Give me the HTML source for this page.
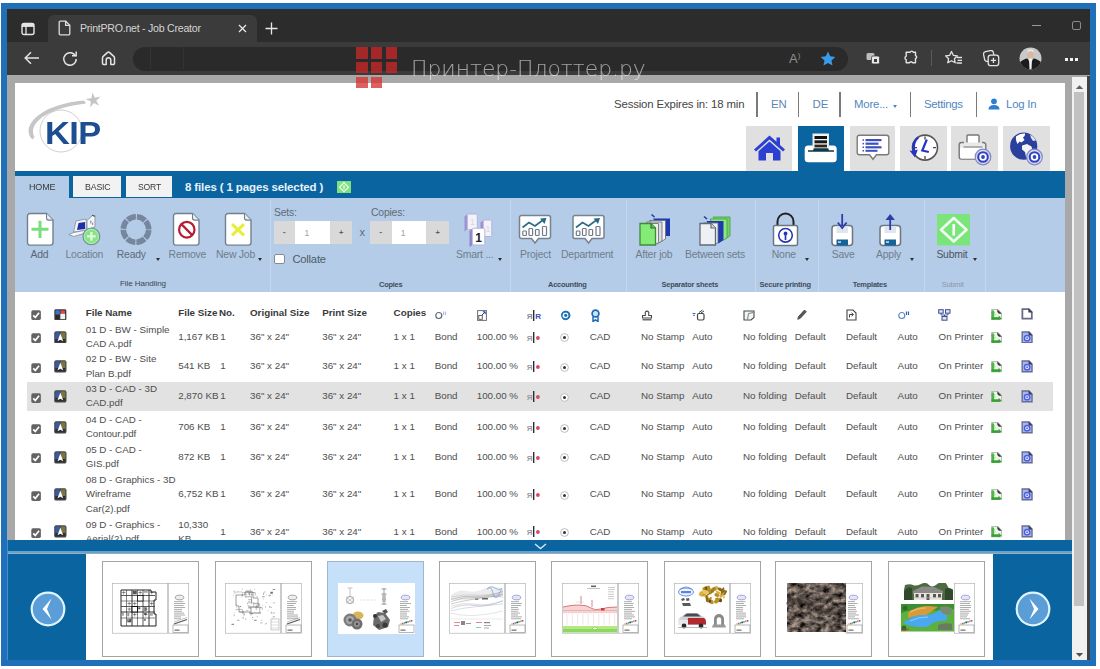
<!DOCTYPE html>
<html lang="en">
<head>
<meta charset="utf-8">
<title>PrintPRO.net - Job Creator</title>
<style>
html,body{margin:0;padding:0;}
body{width:1100px;height:669px;overflow:hidden;background:#fff;position:relative;font-family:"Liberation Sans",sans-serif;}
body div, body span, body svg{position:absolute;box-sizing:border-box;}
.t{white-space:nowrap;line-height:1;transform-origin:0 0;}
.ui{font-family:"Liberation Sans",sans-serif;}
.rl{font-size:10.4px;color:#6f7d8c;letter-spacing:-0.2px;}
.gl{font-size:7.4px;color:#3f4d5c;font-weight:bold;letter-spacing:-0.2px;}
.sep{width:1px;top:200px;height:92px;background:#c4d7ec;}
.arr{width:0;height:0;border-left:2.600px solid transparent;border-right:2.600px solid transparent;border-top:3.800px solid #2e2e2e;}
.tc{font-size:9.800px;color:#4e4e4e;}
.th{font-size:9.800px;color:#3a3a3a;font-weight:bold;}
</style>
</head>
<body>
<!-- outer frame -->
<div style="left:1.300px;top:3.300px;width:1094.300px;height:662.300px;background:#1f70b9;"></div>
<div style="left:7.200px;top:9.300px;width:1082.400px;height:650.400px;background:#a8a8a8;"></div>
<!-- browser chrome -->
<div style="left:7.200px;top:9.300px;width:1082.400px;height:33px;background:#2c2c2c;"></div>
<div style="left:7.200px;top:42.300px;width:1082.400px;height:33.200px;background:#3b3b3b;"></div>
<div style="left:48px;top:15px;width:209px;height:28px;background:#3b3b3b;border-radius:6px 6px 0 0;"></div>
<!-- tab strip icons -->
<svg style="left:21px;top:22px" width="14" height="14" viewBox="0 0 14 14"><rect x="1" y="1.5" width="12" height="11" rx="2" fill="none" stroke="#e6e6e6" stroke-width="1.4"/><rect x="1" y="1.5" width="12" height="3.4" fill="#e6e6e6"/><line x1="5" y1="4" x2="5" y2="12.5" stroke="#e6e6e6" stroke-width="1.3"/></svg>
<svg style="left:58px;top:20px" width="14" height="16" viewBox="0 0 14 16"><path d="M2.2 1.2h5.6l4 4v8.6a1 1 0 0 1-1 1H2.2a1 1 0 0 1-1-1V2.2a1 1 0 0 1 1-1z M7.6 1.4v4h4" fill="none" stroke="#dcdcdc" stroke-width="1.3"/></svg>
<span class="t" style="left:80px;top:22.800px;font-size:10.600px;color:#d4d4d4;letter-spacing:-0.250px;">PrintPRO.net - Job Creator</span>
<svg style="left:238px;top:24px" width="9" height="9" viewBox="0 0 9 9"><path d="M1 1l7 7M8 1l-7 7" stroke="#e8e8e8" stroke-width="1.3"/></svg>
<svg style="left:265px;top:22px" width="13" height="13" viewBox="0 0 13 13"><path d="M6.5 0.5v12M0.5 6.5h12" stroke="#e8e8e8" stroke-width="1.3"/></svg>
<!-- window buttons -->
<div style="left:1031.500px;top:24.500px;width:9px;height:1.3px;background:#9a9a9a;"></div>
<div style="left:1071.500px;top:20.500px;width:9.5px;height:9.5px;border:1.2px solid #8a8a8a;border-radius:2px;"></div>
<!-- nav buttons -->
<svg style="left:24px;top:51px" width="16" height="14" viewBox="0 0 16 14"><path d="M15 7H1.5M7 1.2L1.2 7l5.8 5.8" fill="none" stroke="#e4e4e4" stroke-width="1.5"/></svg>
<svg style="left:62px;top:50px" width="16" height="17" viewBox="0 0 16 17"><path d="M13.6 6.3A6.2 6.2 0 1 0 14.2 9" fill="none" stroke="#e4e4e4" stroke-width="1.5"/><path d="M10 5.8h4.2V1.6" fill="none" stroke="#e4e4e4" stroke-width="1.5"/></svg>
<svg style="left:101px;top:50px" width="15" height="16" viewBox="0 0 15 16"><path d="M1.500 7.800Q1.500 7 2.200 6.400L6.600 2.400Q7.500 1.600 8.400 2.400L12.800 6.400Q13.500 7 13.500 7.800V13.300a1.200 1.200 0 0 1-1.200 1.200H9.800V10a2.300 2.300 0 0 0-4.600 0v4.500H2.700a1.200 1.200 0 0 1-1.200-1.200z" fill="none" stroke="#e4e4e4" stroke-width="1.500" stroke-linejoin="round"/></svg>
<!-- address bar -->
<div style="left:133px;top:46.700px;width:715px;height:24.300px;background:#2a2a2a;border-radius:12.200px;"></div>
<div style="left:150px;top:47px;width:1px;height:22px;background:#333;"></div>
<div style="left:183px;top:47px;width:1px;height:22px;background:#333;"></div>
<span class="t" style="left:789px;top:52px;font-size:13px;color:#8e8e8e;">A<span style="position:static;font-size:8px;vertical-align:top;">)</span></span>
<svg style="left:820px;top:51px" width="16" height="15" viewBox="0 0 16 15"><path d="M8 0.6l2.2 4.7 5.1.6-3.8 3.5 1 5L8 11.9l-4.5 2.5 1-5L.7 5.9l5.1-.6z" fill="#3b9be8"/></svg>
<!-- right toolbar icons -->
<svg style="left:866px;top:52px" width="15" height="13" viewBox="0 0 15 13"><rect x="0.5" y="1" width="8" height="7" rx="1.5" fill="#bdbdbd"/><rect x="5.5" y="4" width="8" height="8" rx="1.5" fill="#e8e8e8" stroke="#3b3b3b" stroke-width="0.8"/><rect x="8" y="7" width="3" height="3" fill="#3b3b3b"/></svg>
<svg style="left:903px;top:50px" width="15" height="16" viewBox="0 0 15 16"><path d="M5 2.2h2.2a1.6 1.6 0 0 1 3 0H12.5v3.3a1.7 1.7 0 0 1 0 3.2v4.1H9.6a1.6 1.6 0 0 0-3 0H3.2V9.6a1.8 1.8 0 0 1 0-3.4V2.2z" fill="none" stroke="#e4e4e4" stroke-width="1.4" stroke-linejoin="round"/></svg>
<div style="left:931px;top:50px;width:1px;height:16px;background:#5a5a5a;"></div>
<svg style="left:945px;top:50px" width="18" height="16" viewBox="0 0 18 16"><path d="M6.5 1.5l1.8 3.8 4.1.5-3 2.9.8 4.1-3.7-2-3.7 2 .8-4.1-3-2.900 4.100-.5z" fill="none" stroke="#e4e4e4" stroke-width="1.3" stroke-linejoin="round"/><path d="M12 7.500h5M12.5 10.300h4.500M11.500 13h5.500" stroke="#e4e4e4" stroke-width="1.300"/></svg>
<svg style="left:983px;top:50px" width="17" height="17" viewBox="0 0 17 17"><rect x="1" y="1" width="10" height="10" rx="2.500" fill="none" stroke="#e4e4e4" stroke-width="1.300" transform="rotate(-12 6 6)"/><rect x="5.200" y="5.200" width="10.500" height="10.500" rx="2.500" fill="#3b3b3b" stroke="#e4e4e4" stroke-width="1.300"/><path d="M10.450 7.800v5.300M7.800 10.450h5.300" stroke="#e4e4e4" stroke-width="1.300"/></svg>
<!-- avatar -->
<svg style="left:1019px;top:47px" width="23" height="23" viewBox="0 0 23 23"><defs><clipPath id="av"><circle cx="11.500" cy="11.500" r="11"/></clipPath></defs><g clip-path="url(#av)"><rect width="23" height="23" fill="#c9c9c9"/><ellipse cx="11.500" cy="7.500" rx="3.300" ry="4.200" fill="#d9b8a6"/><path d="M8.300 5.500q3.200-3 6.400 0l-.3-2.300q-2.900-1.800-5.800 0z" fill="#e8e8e8"/><path d="M0 23V16q5-4.500 8.500-4.500l3 5 3-5Q18 11.500 23 16v7z" fill="#1c1c1c"/><path d="M10 11.500h3l-.5 11h-2z" fill="#f2f2f2"/></g></svg>
<div style="left:1064.5px;top:57.500px;width:3px;height:3px;background:#f0f0f0;"></div>
<div style="left:1069.800px;top:57.500px;width:3px;height:3px;background:#f0f0f0;"></div>
<div style="left:1075px;top:57.500px;width:3px;height:3px;background:#f0f0f0;"></div>
<!-- page -->
<div style="left:15px;top:83px;width:1049.7px;height:460px;background:#fff;"></div>
<!-- scrollbar -->
<div style="left:1072px;top:76.500px;width:14.700px;height:583.200px;background:#f1f1f1;"></div>
<div style="left:1074.3px;top:92px;width:10px;height:514px;background:#c1c1c1;"></div>
<div style="left:1086.7px;top:75.5px;width:3px;height:584.2px;background:#424242;"></div>
<svg style="left:1075px;top:84px" width="9" height="6" viewBox="0 0 9 6"><path d="M0.800 5L4.500 1.200 8.200 5z" fill="#606060"/></svg>
<svg style="left:1075px;top:652px" width="9" height="6" viewBox="0 0 9 6"><path d="M0.800 1L4.500 4.800 8.200 1z" fill="#505050"/></svg>
<!-- KIP logo -->
<svg style="left:24px;top:90px" width="90" height="70" viewBox="0 0 90 70">
  <path d="M8.500 49.500C-3 40 10 15 60 10.500L62 13.500C18 18.500 4 36 10.500 47z" fill="#c6c6c6"/>
  <circle cx="37" cy="41" r="21" fill="none" stroke="#c9c9c9" stroke-width="0.900"/>
  <path d="M69.500 2.500l1.600 5.500 5.900-.4-4.900 3.400 2.300 5.400-4.800-3.400-4.600 3.700 1.800-5.600-5-3.100 5.900-.1z" fill="#c4c4c4" transform="rotate(-8 69.500 10)"/>
</svg>
<span class="t" style="left:45px;top:117.200px;font-size:32px;font-weight:bold;color:#1d4e92;transform:scaleX(1.075);letter-spacing:-0.500px;">KIP</span>
<!-- top nav -->
<span class="t" style="left:614px;top:98.800px;font-size:11.400px;color:#444;letter-spacing:-0.150px;">Session Expires in: 18 min</span>
<div style="left:756px;top:92px;width:1.500px;height:24.500px;background:#7a7a7a;"></div>
<span class="t" style="left:771px;top:98.800px;font-size:11.400px;color:#5b86b3;">EN</span>
<div style="left:797.500px;top:92px;width:1.500px;height:24.500px;background:#7a7a7a;"></div>
<span class="t" style="left:812.500px;top:98.800px;font-size:11.400px;color:#5b86b3;">DE</span>
<div style="left:839px;top:92px;width:1.500px;height:24.500px;background:#7a7a7a;"></div>
<span class="t" style="left:854px;top:98.800px;font-size:11.400px;color:#4f86c0;letter-spacing:-0.200px;">More...</span>
<div class="arr" style="left:893px;top:104.500px;border-top-color:#4f86c0;"></div>
<div style="left:909.500px;top:92px;width:1.500px;height:24.500px;background:#7a7a7a;"></div>
<span class="t" style="left:924px;top:98.800px;font-size:11.400px;color:#4f86c0;letter-spacing:-0.300px;">Settings</span>
<div style="left:975.500px;top:92px;width:1.500px;height:24.500px;background:#7a7a7a;"></div>
<svg style="left:988px;top:98px" width="12" height="12" viewBox="0 0 12 12"><circle cx="6" cy="3.300" r="2.900" fill="#2f7fd0"/><path d="M0.500 11.500q0-4.500 5.500-4.500t5.500 4.500z" fill="#2f7fd0"/></svg>
<span class="t" style="left:1006px;top:98.800px;font-size:11.400px;color:#4f86c0;letter-spacing:-0.200px;">Log In</span>
<!-- nav buttons -->
<div style="left:745.800px;top:125.500px;width:46.700px;height:46px;background:#e0e0e0;"></div>
<div style="left:798.200px;top:125.500px;width:45.600px;height:46px;background:#0a64a0;"></div>
<div style="left:849.500px;top:125.500px;width:45.800px;height:46px;background:#e0e0e0;"></div>
<div style="left:900px;top:125.500px;width:47px;height:46px;background:#e0e0e0;"></div>
<div style="left:951.300px;top:125.500px;width:47px;height:46px;background:#e0e0e0;"></div>
<div style="left:1003.400px;top:125.500px;width:46.600px;height:46px;background:#e0e0e0;"></div>
<!-- home -->
<svg style="left:753px;top:134px" width="33" height="28" viewBox="0 0 33 28"><path d="M16.500 1.500L1 15.500l2 2L16.500 5.500 30 17.500l2-2-5-4.500V3.500h-3.500v4.300z" fill="#2b3fd0"/><path d="M16.500 7.500L5.500 17.200v9.300h7.500v-7.500h7v7.500h7.500v-9.300z" fill="#2b3fd0"/></svg>
<!-- printer (active) -->
<svg style="left:803px;top:133px" width="36" height="31" viewBox="0 0 36 31"><rect x="1.700" y="12.500" width="32" height="16.700" rx="3.500" fill="#fff"/><rect x="10" y="1" width="15.500" height="15" fill="#f4f4f4" stroke="#e9e9e9" stroke-width="1"/><rect x="11.500" y="3" width="12.500" height="3" fill="#111"/><rect x="11.500" y="7.300" width="12.500" height="3" fill="#1a1a1a"/><rect x="11.500" y="11.600" width="12.500" height="2.800" fill="#33231a"/><path d="M5 17.200h5l1-2h14l1 2h5v1.600H5z" fill="#0d3a4a"/></svg>
<!-- comment list -->
<svg style="left:856px;top:134px" width="34" height="27" viewBox="0 0 34 27"><path d="M3.500 1.200h27a2.300 2.300 0 0 1 2.300 2.300v15a2.300 2.300 0 0 1-2.300 2.300H20.500l-3.500 4.500-3.500-4.500H3.500a2.300 2.300 0 0 1-2.300-2.300v-15a2.300 2.300 0 0 1 2.300-2.300z" fill="#fff" stroke="#7a7a7a" stroke-width="1.400"/><g fill="#3a4fc4"><rect x="9.500" y="5" width="16" height="2.200"/><rect x="9.500" y="8.600" width="13" height="2.200"/><rect x="9.500" y="12.200" width="16" height="2.200"/><rect x="9.500" y="15.800" width="12" height="2"/><rect x="6.500" y="5.300" width="1.500" height="1.500"/><rect x="6.500" y="8.900" width="1.500" height="1.500"/><rect x="6.500" y="12.500" width="1.500" height="1.500"/><rect x="6.500" y="16" width="1.500" height="1.500"/></g></svg>
<!-- clock -->
<svg style="left:908px;top:132px" width="32" height="32" viewBox="0 0 32 32"><circle cx="17" cy="15.600" r="12.500" fill="#fff" stroke="#555" stroke-width="1.600"/><path d="M17 4.500v3M17 24v3M28 15.600h-3M6 15.600H9" stroke="#444" stroke-width="1.300"/><path d="M18.800 7.500L14.300 18.500l6.500 1.500" fill="none" stroke="#2436c0" stroke-width="2.200"/><path d="M9.500 4.500Q2.500 10 4.500 19l-3-.5 5.500 7 2.800-8-2.600.8Q5.800 11 11 6z" fill="#2436c0"/></svg>
<!-- printer + gear -->
<svg style="left:957px;top:133px" width="36" height="34" viewBox="0 0 36 34"><rect x="10" y="2" width="12" height="12" rx="1" fill="#fff" stroke="#777" stroke-width="1.400"/><path d="M7 9.500h-2.500a2.300 2.300 0 0 0-2.300 2.300v12a2.300 2.300 0 0 0 2.300 2.300h22a2.300 2.300 0 0 0 2.300-2.300v-12a2.300 2.300 0 0 0-2.300-2.300H25" fill="#e9e9e9" stroke="#777" stroke-width="1.400"/><rect x="3" y="14.500" width="25" height="11" rx="1.500" fill="#fff"/><path d="M6.500 14h19" stroke="#888" stroke-width="1.200"/><circle cx="26" cy="24" r="7.800" fill="#d8dcf2" stroke="#8088c4" stroke-width="1.200"/><circle cx="26" cy="24" r="4.800" fill="#fff" stroke="#3344c0" stroke-width="2.100"/><circle cx="26" cy="24" r="1.900" fill="#3344c0"/></svg>
<!-- globe + gear -->
<svg style="left:1009px;top:131px" width="38" height="36" viewBox="0 0 38 36"><circle cx="14.700" cy="15.200" r="13.600" fill="#2b3f9c"/><path d="M7 5.500q4-3.500 9-3 .5 2.500-2 4l1.500 2.500-3 2.500-2-1-2 2.500q-2-3-1.500-7.500z" fill="#fff"/><path d="M13 14.500l5-1.500 4.500 2.500 1 3.500-2.500 3-1 5-3-1-1-5-3-2.500z" fill="#f4f4f4"/><path d="M21 3.500q4 2 6 6l-3 .5-2-3z" fill="#dfe3f5"/><circle cx="25.500" cy="26" r="7.800" fill="#d8dcf2" stroke="#8088c4" stroke-width="1.200"/><circle cx="25.500" cy="26" r="4.800" fill="#fff" stroke="#3344c0" stroke-width="2.100"/><circle cx="25.500" cy="26" r="1.900" fill="#3344c0"/></svg>
<!-- ribbon header -->
<div style="left:15px;top:171.200px;width:1049.700px;height:26.800px;background:#0a64a0;"></div>
<div style="left:15px;top:197.600px;width:1049.700px;height:94.400px;background:#b4cce7;"></div>
<div style="left:15px;top:175.500px;width:53.600px;height:23px;background:#b4cce7;"></div>
<div style="left:72.600px;top:175.700px;width:48px;height:21.300px;background:#f2f2f2;"></div>
<div style="left:125.500px;top:175.700px;width:46px;height:21.300px;background:#f2f2f2;"></div>
<span class="t" style="left:28.800px;top:181.700px;font-size:9.800px;color:#3a3a3a;transform:scaleX(0.920);letter-spacing:-0.200px;">HOME</span>
<span class="t" style="left:84.600px;top:181.500px;font-size:9.800px;color:#3a3a3a;transform:scaleX(0.900);letter-spacing:-0.200px;">BASIC</span>
<span class="t" style="left:137.600px;top:181.500px;font-size:9.800px;color:#3a3a3a;transform:scaleX(0.880);letter-spacing:-0.200px;">SORT</span>
<span class="t" style="left:185px;top:181.600px;font-size:11.500px;font-weight:bold;color:#e8f2fb;letter-spacing:-0.130px;">8 files ( 1 pages selected )</span>
<svg style="left:337px;top:181px" width="14" height="12.400" viewBox="0 0 14 11" preserveAspectRatio="none"><rect width="14" height="11" fill="#7ee07e"/><path d="M7 1.500l4.500 4-4.500 4-4.500-4z" fill="none" stroke="#eaffea" stroke-width="1.200"/><path d="M7 3.800v3.400" stroke="#fff" stroke-width="1.200"/></svg>
<!-- group separators -->
<div class="sep" style="left:270px;"></div>
<div class="sep" style="left:509.500px;"></div>
<div class="sep" style="left:625.500px;"></div>
<div class="sep" style="left:754.500px;"></div>
<div class="sep" style="left:818px;"></div>
<div class="sep" style="left:923.600px;"></div>
<div class="sep" style="left:985px;"></div>
<!-- File handling -->
<svg style="left:26px;top:212px" width="29" height="34.700" viewBox="0 0 29 34" preserveAspectRatio="none"><path d="M4 1.500h16.500l6.500 6.500v22a2.500 2.500 0 0 1-2.500 2.500H4A2.500 2.500 0 0 1 1.500 30V4A2.500 2.500 0 0 1 4 1.500z" fill="#fff" stroke="#71808f" stroke-width="1.400"/><path d="M20.500 1.500v4.500a2 2 0 0 0 2 2h4.500" fill="#e9edf2" stroke="#71808f" stroke-width="1.100"/><path d="M14 8.500v17M5.500 17h17" stroke="#7ade7a" stroke-width="3"/></svg>
<span class="t rl" style="left:30.500px;top:250px;color:#5a6673;">Add</span>
<svg style="left:68px;top:213px" width="35" height="35" viewBox="0 0 35 35"><path d="M19 7.500l5.500-5 2.500.800v10.500l-8 3z" fill="#f4f6fa" stroke="#8a94a0" stroke-width="0.900"/><path d="M24 2.300l3.200 1" stroke="#4a5560" stroke-width="1.200"/><path d="M22.800 7.500v3M24.700 9.500v2.500" stroke="#7a8490" stroke-width="1"/><path d="M5.500 19l2.500-11 10-2 .800 11.500z" fill="#f2f4f8" stroke="#8a94a0" stroke-width="0.900"/><path d="M9 17l1.500-7 6.500-1 .300 7z" fill="#1d30a8"/><path d="M0.800 21.500l5-2 13-2.500v2.500l-13 4z" fill="#f6f8fb" stroke="#8a94a0" stroke-width="0.900"/><circle cx="23.400" cy="23.400" r="8.400" fill="#86e486" stroke="#7d8a98" stroke-width="1.100"/><circle cx="23.400" cy="23.400" r="7" fill="none" stroke="#b4f0b4" stroke-width="0.900"/><path d="M23.400 19v8.800M19 23.400h8.800" stroke="#dcfadc" stroke-width="2.400"/></svg>
<span class="t rl" style="left:65.500px;top:250px;">Location</span>
<svg style="left:119px;top:213px" width="34" height="34" viewBox="0 0 34 34"><circle cx="17" cy="16.500" r="12.700" fill="none" stroke="#76869e" stroke-width="5.600" stroke-dasharray="8.900 1.075" stroke-dashoffset="-0.540"/></svg>
<span class="t rl" style="left:116.800px;top:250px;color:#5f6b78;">Ready</span>
<div class="arr" style="left:155.800px;top:257.600px;"></div>
<svg style="left:172px;top:212px" width="29" height="34.700" viewBox="0 0 29 34" preserveAspectRatio="none"><path d="M4 1.500h16.500l6.500 6.500v22a2.500 2.500 0 0 1-2.500 2.500H4A2.500 2.500 0 0 1 1.500 30V4A2.500 2.500 0 0 1 4 1.500z" fill="#fff" stroke="#71808f" stroke-width="1.400"/><path d="M20.500 1.500v4.500a2 2 0 0 0 2 2h4.500" fill="#e9edf2" stroke="#71808f" stroke-width="1.100"/><circle cx="14.800" cy="17.300" r="7.700" fill="none" stroke="#b81c34" stroke-width="2.200"/><path d="M9.400 11.900l10.800 10.800" stroke="#b81c34" stroke-width="2.200"/></svg>
<span class="t rl" style="left:168.600px;top:250px;">Remove</span>
<svg style="left:224px;top:212px" width="29" height="34.700" viewBox="0 0 29 34" preserveAspectRatio="none"><path d="M4 1.500h16.500l6.500 6.500v22a2.500 2.500 0 0 1-2.500 2.500H4A2.500 2.500 0 0 1 1.500 30V4A2.500 2.500 0 0 1 4 1.500z" fill="#fff" stroke="#71808f" stroke-width="1.400"/><path d="M20.500 1.500v4.500a2 2 0 0 0 2 2h4.500" fill="#e9edf2" stroke="#71808f" stroke-width="1.100"/><path d="M8 11.800l12 11.200M20 11.800L8 23" stroke="#e8ee38" stroke-width="3.100"/></svg>
<span class="t rl" style="left:216px;top:250px;">New Job</span>
<div class="arr" style="left:257.800px;top:257.600px;"></div>
<span class="t gl" style="left:120px;top:280.300px;font-weight:normal;font-size:8.100px;color:#3a4652;letter-spacing:-0.100px;">File Handling</span>
<!-- Copies group -->
<span class="t rl" style="left:274px;top:207.500px;font-size:10.400px;color:#5f6b78;">Sets:</span>
<div style="left:274px;top:221.400px;width:78.400px;height:22.600px;background:#d9d9d9;"></div>
<div style="left:295px;top:221.400px;width:35px;height:22.600px;background:#fff;"></div>
<span class="t" style="left:282.800px;top:228px;font-size:9px;font-weight:bold;color:#707070;">-</span>
<span class="t" style="left:304.500px;top:228.500px;font-size:8.500px;color:#a0a0a0;">1</span>
<span class="t" style="left:339px;top:229px;font-size:7.500px;font-weight:bold;color:#606060;">+</span>
<span class="t" style="left:359.500px;top:227px;font-size:11px;color:#5f6b78;">x</span>
<span class="t rl" style="left:371px;top:207.500px;font-size:10.400px;color:#5f6b78;">Copies:</span>
<div style="left:370.400px;top:221.400px;width:78.600px;height:22.600px;background:#d9d9d9;"></div>
<div style="left:391.800px;top:221.400px;width:34px;height:22.600px;background:#fff;"></div>
<span class="t" style="left:379.300px;top:228px;font-size:9px;font-weight:bold;color:#707070;">-</span>
<span class="t" style="left:400.700px;top:228.500px;font-size:8.500px;color:#a0a0a0;">1</span>
<span class="t" style="left:435.500px;top:229px;font-size:7.500px;font-weight:bold;color:#606060;">+</span>
<div style="left:274px;top:253.500px;width:10.500px;height:10.500px;background:#fff;border:1px solid #8a8a8a;border-radius:2px;"></div>
<span class="t" style="left:292.400px;top:253.500px;font-size:11.200px;color:#4f5b68;letter-spacing:-0.200px;">Collate</span>
<svg style="left:463px;top:212px" width="30" height="35" viewBox="0 0 30 35"><path d="M1.500 4.500l3-2.500v15l-3 2.500z" fill="#9d92d0"/><rect x="4.300" y="2" width="10" height="15.500" rx="1.300" fill="#f3f1fa" stroke="#b4abdc" stroke-width="0.900"/><text x="7" y="13" font-family="Liberation Sans,sans-serif" font-size="8.500" fill="#d5d9e2">1</text><path d="M17.500 10.500l3-2.500v16l-3 2.500z" fill="#9d92d0"/><rect x="20.300" y="8" width="8.500" height="16.500" rx="1.300" fill="#f3f1fa" stroke="#b4abdc" stroke-width="0.900"/><text x="22.500" y="19.500" font-family="Liberation Sans,sans-serif" font-size="8.500" fill="#d5d9e2">1</text><path d="M6.500 19l3-2.500v16.500l-3 2z" fill="#8f84c8"/><rect x="9.300" y="16.300" width="12.500" height="16.700" rx="1.300" fill="#fff" stroke="#b4abdc" stroke-width="0.900"/><text x="12.300" y="29.500" font-family="Liberation Sans,sans-serif" font-size="12" font-weight="bold" fill="#222">1</text></svg>
<span class="t rl" style="left:456px;top:250px;">Smart ...</span>
<div class="arr" style="left:497.600px;top:257.600px;"></div>
<span class="t gl" style="left:379px;top:280.500px;">Copies</span>
<!-- Accounting -->
<svg style="left:518px;top:214px" width="34" height="31" viewBox="0 0 34 31"><path d="M3.500 1.500h27a2 2 0 0 1 2 2v19a2 2 0 0 1-2 2H20.500l-3.500 4.500-3.500-4.500H3.500a2 2 0 0 1-2-2v-19a2 2 0 0 1 2-2z" fill="#fff" stroke="#76828f" stroke-width="1.500"/><g fill="none" stroke="#6f7b88" stroke-width="1.200"><rect x="4.800" y="17" width="3.600" height="4.500" rx="0.800"/><rect x="11" y="14.500" width="3.600" height="7" rx="0.800"/><rect x="17.500" y="15.500" width="3.600" height="6" rx="0.800"/><rect x="24.500" y="12.500" width="4" height="9" rx="0.800"/></g><path d="M4.500 13.500l6.500-5 6 3.500 8-6" fill="none" stroke="#2a6a86" stroke-width="1.600"/><path d="M22 4.500l6.500-.5-2 6z" fill="#2a6a86"/></svg>
<span class="t rl" style="left:520px;top:250px;">Project</span>
<svg style="left:571px;top:214px" width="35" height="31" viewBox="0 0 34 31"><path d="M3.500 1.500h27a2 2 0 0 1 2 2v19a2 2 0 0 1-2 2H20.500l-3.500 4.500-3.500-4.500H3.500a2 2 0 0 1-2-2v-19a2 2 0 0 1 2-2z" fill="#fff" stroke="#76828f" stroke-width="1.500"/><g fill="none" stroke="#6f7b88" stroke-width="1.200"><rect x="4.800" y="17" width="3.600" height="4.500" rx="0.800"/><rect x="11" y="14.500" width="3.600" height="7" rx="0.800"/><rect x="17.500" y="15.500" width="3.600" height="6" rx="0.800"/><rect x="24.500" y="12.500" width="4" height="9" rx="0.800"/></g><path d="M4.500 13.500l6.500-5 6 3.500 8-6" fill="none" stroke="#2a6a86" stroke-width="1.600"/><path d="M22 4.500l6.500-.5-2 6z" fill="#2a6a86"/></svg>
<span class="t rl" style="left:561px;top:250px;">Department</span>
<span class="t gl" style="left:548px;top:280.500px;">Accounting</span>
<!-- Separator sheets -->
<svg style="left:638px;top:212px" width="34" height="35" viewBox="0 0 34 35"><path d="M15 6.500h17v17.500h-6z" fill="#1f3ab0"/><path d="M11.500 8.500h16v18.500l-5 3z" fill="#f4f4f4" stroke="#6a7480" stroke-width="0.900"/><path d="M8.500 10h15.500v19l-5 3z" fill="#dcdcdc" stroke="#6a7480" stroke-width="0.900"/><path d="M5.500 11.500h15v19l-4 2.500z" fill="#f0f0f0" stroke="#6a7480" stroke-width="0.900"/><path d="M2 11.500h11l4.500 4.500V33H2z" fill="#84ec76" stroke="#3f8a3a" stroke-width="1.300"/><path d="M13 11.500v4.500h4.500" fill="#5ac850" stroke="#2f6a2f" stroke-width="1.200"/><path d="M13.500 2.500l3 2.500" stroke="#1f3ab0" stroke-width="1.600"/></svg>
<span class="t rl" style="left:635.500px;top:250px;">After job</span>
<svg style="left:698px;top:212px" width="34" height="35" viewBox="0 0 34 35"><path d="M15 5h17v19l-5 3z" fill="#6fd466" stroke="#4a9a48" stroke-width="0.800"/><path d="M12 7h17v19l-5 3z" fill="#8fe67e" stroke="#4a9a48" stroke-width="0.800"/><path d="M8.500 9h17v19l-5 3.500z" fill="#1f3ab0"/><path d="M5.500 11h14.500v19.500l-4 2.500z" fill="#f2f2f2" stroke="#6a7480" stroke-width="0.900"/><path d="M2 11.500h11l4.500 4.500V33H2z" fill="#eef0f4" stroke="#5f6a78" stroke-width="1.300"/><path d="M13 11.500v4.500h4.500" fill="#d4d8e0" stroke="#5f6a78" stroke-width="1.200"/><path d="M6 4.500l3 2.500" stroke="#1f3ab0" stroke-width="1.600"/></svg>
<span class="t rl" style="left:685px;top:250px;">Between sets</span>
<span class="t gl" style="left:661.500px;top:280.500px;">Separator sheets</span>
<!-- Secure printing -->
<svg style="left:771px;top:211px" width="29" height="36" viewBox="0 0 29 36"><path d="M6.500 15V10.500a8 8 0 0 1 16 0V15" fill="none" stroke="#222" stroke-width="2"/><rect x="2.500" y="14.500" width="24" height="20" rx="1.500" fill="#fff" stroke="#6b7683" stroke-width="1.500"/><circle cx="14.500" cy="24.300" r="6.800" fill="none" stroke="#2438b8" stroke-width="1.600"/><circle cx="14.500" cy="22.500" r="1.900" fill="#2438b8"/><path d="M14.500 23v6" stroke="#2438b8" stroke-width="1.700"/></svg>
<span class="t rl" style="left:771.800px;top:250px;">None</span>
<div class="arr" style="left:805.200px;top:257.600px;"></div>
<span class="t gl" style="left:759.600px;top:280.500px;">Secure printing</span>
<!-- Templates -->
<svg style="left:830px;top:213px" width="24" height="34" viewBox="0 0 24 34"><rect x="2" y="12.500" width="20.500" height="20" rx="3" fill="#fff" stroke="#6b7683" stroke-width="1.500"/><rect x="6.500" y="13" width="11.500" height="7" fill="#dfe6f0"/><rect x="6.500" y="26.500" width="11.500" height="6" fill="#16639a"/><rect x="8" y="28.300" width="3" height="1.500" fill="#cfe6f7"/><path d="M12.200 1v12" stroke="#2b3da8" stroke-width="1.800"/><path d="M7.800 9.500l4.400 5.500 4.400-5.500" fill="none" stroke="#2b3da8" stroke-width="1.800"/></svg>
<span class="t rl" style="left:831.800px;top:250px;">Save</span>
<svg style="left:878px;top:213px" width="24" height="34" viewBox="0 0 24 34"><rect x="2" y="12.500" width="20.500" height="20" rx="3" fill="#fff" stroke="#6b7683" stroke-width="1.500"/><rect x="6.500" y="13" width="11.500" height="7" fill="#dfe6f0"/><rect x="6.500" y="26.500" width="11.500" height="6" fill="#16639a"/><rect x="8" y="28.300" width="3" height="1.500" fill="#cfe6f7"/><path d="M12.200 4v13" stroke="#2b3da8" stroke-width="1.800"/><path d="M7.500 7L12.200 1l4.700 6z" fill="#2b3da8"/></svg>
<span class="t rl" style="left:876px;top:250px;">Apply</span>
<div class="arr" style="left:910px;top:257.600px;"></div>
<span class="t gl" style="left:852.700px;top:280.500px;">Templates</span>
<!-- Submit -->
<svg style="left:936.700px;top:214px" width="33.500" height="31.500" viewBox="0 0 33.500 31.500"><rect width="33.500" height="31.500" fill="#7be57b"/><path d="M16.750 4L29.500 15.750 16.750 27.500 4 15.750z" fill="none" stroke="#f0fff0" stroke-width="2.600" stroke-linejoin="round"/><path d="M16.750 10v11.500" stroke="#fff" stroke-width="2.600"/></svg>
<span class="t rl" style="left:936.400px;top:250px;color:#4a5562;">Submit</span>
<div class="arr" style="left:973px;top:257.600px;"></div>
<span class="t gl" style="left:941.800px;top:280.500px;color:#8a98a8;font-weight:normal;">Submit</span>
<!-- table -->
<div style="left:27px;top:381.800px;width:1025.600px;height:29.400px;background:#e2e2e2;"></div>
<svg style="left:31.2px;top:309.9px" width="10.200" height="10.200" viewBox="0 0 10 10"><rect x="0.300" y="0.300" width="9.400" height="9.400" rx="1.600" fill="#636363"/><path d="M2.200 5.200l2 2.100 3.700-4.600" fill="none" stroke="#fff" stroke-width="1.700"/></svg>
<svg style="left:54.300px;top:308.600px" width="12.700" height="11.600" viewBox="0 0 12 12" preserveAspectRatio="none"><rect x="0.300" y="0.300" width="11.400" height="11.400" rx="1.500" fill="#3c3c3c"/><rect x="1.500" y="1.500" width="4" height="4" fill="#3f6fd8"/><rect x="6.300" y="1.500" width="4" height="4" fill="#e04a4a"/><rect x="6" y="5" width="4.500" height="5.500" fill="#f2f2f2"/><rect x="1.500" y="6.300" width="3.500" height="4" fill="#2a2a2a"/></svg>
<span class="t th" style="left:85.7px;top:308.2px;">File Name</span>
<span class="t th" style="left:178.2px;top:308.2px;">File Size</span>
<span class="t th" style="left:219px;top:308.2px;">No.</span>
<span class="t th" style="left:250px;top:308.2px;">Original Size</span>
<span class="t th" style="left:322.2px;top:308.2px;">Print Size</span>
<span class="t th" style="left:393.6px;top:308.2px;">Copies</span>
<!-- header icons -->
<svg style="left:434.500px;top:310px" width="13" height="10" viewBox="0 0 13 10"><circle cx="3.800" cy="5.500" r="3" fill="none" stroke="#5a6470" stroke-width="1.200"/><path d="M8.500 1.500v3.500M10.500 1.500v3.500" stroke="#a8c0e8" stroke-width="1.200"/></svg>
<svg style="left:476.700px;top:309.500px" width="10" height="11" viewBox="0 0 10 11"><rect x="0.600" y="0.600" width="8.800" height="9.800" fill="#fff" stroke="#6a7078" stroke-width="1"/><rect x="1.800" y="5.500" width="3.500" height="3.800" fill="none" stroke="#555" stroke-width="0.900"/><path d="M5 5l3-3M5.800 1.800h2.400v2.400" fill="none" stroke="#2a3fb0" stroke-width="1"/></svg>
<svg style="left:527px;top:309.500px" width="15" height="11" viewBox="0 0 15 11"><text x="0" y="8.500" font-family="Liberation Sans,sans-serif" font-size="8" font-weight="bold" fill="#8a8a92" transform="translate(5.500 0) scale(-1 1)">R</text><path d="M6.700 0v11" stroke="#222" stroke-width="1.300"/><text x="8.300" y="8.500" font-family="Liberation Sans,sans-serif" font-size="8" font-weight="bold" fill="#3a4fc0">R</text></svg>
<svg style="left:559.500px;top:309.500px" width="11" height="11" viewBox="0 0 11 11"><path d="M5.500 0.800a4.700 4.700 0 1 1-3.300 8l1.200-1.200a3 3 0 1 0-.9-2.300H.500L2.800 2.500" fill="#1a72b8"/><circle cx="5.700" cy="5.300" r="1.600" fill="#1a72b8"/><circle cx="5.700" cy="5.300" r="3.900" fill="none" stroke="#1a72b8" stroke-width="1.500"/></svg>
<svg style="left:589.500px;top:308.500px" width="11" height="13" viewBox="0 0 11 13"><circle cx="5.500" cy="4.500" r="3.400" fill="#cfe2f5" stroke="#1a6ab8" stroke-width="1.700"/><path d="M3 7.500v5l2.500-1.600L8 12.500v-5" fill="none" stroke="#1a6ab8" stroke-width="1.500"/></svg>
<svg style="left:640.500px;top:309.500px" width="12" height="11" viewBox="0 0 12 11"><path d="M4.300 5.500V3.500a1.800 1.800 0 1 1 3.400 0v2h2.800v2.500H1.500V5.500z" fill="none" stroke="#4a4a4a" stroke-width="1.100"/><path d="M1.500 9.800h9" stroke="#4a4a4a" stroke-width="1.200"/></svg>
<svg style="left:692px;top:308.500px" width="14" height="12" viewBox="0 0 14 12"><rect x="5.500" y="4.500" width="6.500" height="6.500" rx="1.500" fill="none" stroke="#444" stroke-width="1.200"/><path d="M7 3.500l3.500-2.500M9 4l3-2" stroke="#444" stroke-width="1"/><path d="M0.500 4.500h3M1 6.300h2" stroke="#3a6fd0" stroke-width="1"/></svg>
<svg style="left:743px;top:309.500px" width="12" height="11" viewBox="0 0 12 11"><path d="M1 1h10v6.500L8 10H1z" fill="#f4f4f4" stroke="#4a4a4a" stroke-width="1.100"/><path d="M4.500 9.500l1-6 5-1" fill="none" stroke="#6a8a6a" stroke-width="1"/></svg>
<svg style="left:795.500px;top:309px" width="11" height="12" viewBox="0 0 11 12"><path d="M8.500 1l1.800 1.800-6 6.500-2.600 1 .8-2.700z" fill="#555" stroke="#444" stroke-width="0.800"/></svg>
<svg style="left:846px;top:309px" width="11" height="12" viewBox="0 0 11 12"><path d="M1 1h6l3 3v7H1z" fill="#fff" stroke="#444" stroke-width="1.100"/><path d="M3.500 8.500v-3h3.500M5.500 3.800l2 1.700-2 1.700" fill="none" stroke="#444" stroke-width="1"/></svg>
<svg style="left:897.500px;top:310px" width="13" height="10" viewBox="0 0 13 10"><circle cx="3.800" cy="5.500" r="3" fill="none" stroke="#5a8ac8" stroke-width="1.200"/><path d="M8.500 1.500v3.500M10.500 1.500v3.500" stroke="#2a5fc0" stroke-width="1.200"/></svg>
<svg style="left:938px;top:309px" width="13" height="12" viewBox="0 0 13 12"><rect x="0.700" y="0.700" width="4.500" height="3.500" fill="#dfe6f5" stroke="#3a4a90" stroke-width="1"/><rect x="7.500" y="0.700" width="4.500" height="3.500" fill="#dfe6f5" stroke="#3a4a90" stroke-width="1"/><rect x="4" y="7.500" width="5" height="3.700" fill="#dfe6f5" stroke="#3a4a90" stroke-width="1"/><path d="M3 4.500v1.500h7V4.500M6.500 6v1.500" fill="none" stroke="#3a4a90" stroke-width="0.900"/></svg>
<svg style="left:991px;top:308.700px" width="11" height="11.200" viewBox="0 0 11 11" preserveAspectRatio="none"><path d="M0.500 0.500h6.500l3.500 3.500v6.500h-10z" fill="#eef6ec" stroke="#a8b4a8" stroke-width="0.800"/><path d="M6.300 0.200l4.500 4.500h-2.800l-1.700-1.700z" fill="#3a3a3a"/><rect x="0.600" y="2.800" width="2.500" height="7.600" fill="#4fb348"/><path d="M0 3.600l1.900-3 1.900 3z" fill="#4fb348"/><rect x="0.600" y="8" width="7.500" height="2.500" fill="#37a032"/><path d="M7.600 6.400l3 2.900-3 1.700z" fill="#37a032"/><path d="M3.100 4l2 1.500-2 1.500z" fill="#a8e0a0"/></svg>
<svg style="left:1021.300px;top:308.300px" width="12.200" height="11.800" viewBox="0 0 12 12"><path d="M1.200 1.200h6.600l3 3v6.600H1.200z" fill="#fff" stroke="#666a84" stroke-width="1.800"/><path d="M7.300 0.300l4.400 4.400h-4.400z" fill="#3c3c50"/></svg>

<svg style="left:31.2px;top:333.2px" width="10.200" height="10.200" viewBox="0 0 10 10"><rect x="0.300" y="0.300" width="9.400" height="9.400" rx="1.600" fill="#636363"/><path d="M2.200 5.200l2 2.100 3.700-4.600" fill="none" stroke="#fff" stroke-width="1.700"/></svg>
<svg style="left:54.3px;top:330.7px" width="12.700" height="12.800" viewBox="0 0 12 12"><rect x="0.200" y="0.200" width="11.600" height="11.600" rx="1.800" fill="#454548"/><rect x="1.200" y="1.200" width="4.300" height="9.600" fill="#3a5aa0"/><rect x="6.500" y="1.200" width="4.300" height="9.600" fill="#7a7440"/><rect x="1.200" y="7.500" width="9.600" height="3.300" fill="#2e2e32"/><path d="M3.300 9.600L6 2.300l2.700 7.300L6 8.200z" fill="#fff"/></svg>
<span class="t tc" style="left:85.7px;top:324.8px;">01 D - BW - Simple</span>
<span class="t tc" style="left:85.7px;top:339.1px;">CAD A.pdf</span>
<span class="t tc" style="left:178.2px;top:331.9px;">1,167 KB</span>
<span class="t tc" style="left:220.3px;top:331.9px;">1</span>
<span class="t tc" style="left:250px;top:331.9px;">36" x 24"</span>
<span class="t tc" style="left:322.2px;top:331.9px;">36" x 24"</span>
<span class="t tc" style="left:393.6px;top:331.9px;">1 x 1</span>
<span class="t tc" style="left:434.7px;top:331.9px;">Bond</span>
<span class="t tc" style="left:476.7px;top:331.9px;">100.00 %</span>
<svg style="left:527px;top:331.6px" width="15" height="11" viewBox="0 0 15 11"><text x="0" y="8.500" font-family="Liberation Sans,sans-serif" font-size="8" font-weight="bold" fill="#9a9aa2" transform="translate(5.500 0) scale(-1 1)">R</text><path d="M6.700 0v11" stroke="#222" stroke-width="1.300"/><circle cx="10.900" cy="6" r="1.900" fill="#d8486a"/></svg>
<svg style="left:559.500px;top:333.1px" width="9" height="9" viewBox="0 0 9 9"><circle cx="4.500" cy="4.500" r="3.900" fill="#fff" stroke="#b5b5b5" stroke-width="0.900"/><circle cx="4.500" cy="4.500" r="1.500" fill="#333"/></svg>
<span class="t tc" style="left:589.7px;top:331.9px;">CAD</span>
<span class="t tc" style="left:640.9px;top:331.9px;">No Stamp</span>
<span class="t tc" style="left:692.3px;top:331.9px;">Auto</span>
<span class="t tc" style="left:742.9px;top:331.9px;">No folding</span>
<span class="t tc" style="left:794.7px;top:331.9px;">Default</span>
<span class="t tc" style="left:846px;top:331.9px;">Default</span>
<span class="t tc" style="left:897.6px;top:331.9px;">Auto</span>
<span class="t tc" style="left:938.6px;top:331.9px;">On Printer</span>
<svg style="left:991px;top:331.7px" width="11" height="11.400" viewBox="0 0 11 11" preserveAspectRatio="none"><path d="M0.500 0.500h6.500l3.500 3.500v6.500h-10z" fill="#eef6ec" stroke="#a8b4a8" stroke-width="0.800"/><path d="M6.300 0.200l4.500 4.500h-2.800l-1.700-1.700z" fill="#3a3a3a"/><rect x="0.600" y="2.800" width="2.500" height="7.600" fill="#4fb348"/><path d="M0 3.600l1.900-3 1.900 3z" fill="#4fb348"/><rect x="0.600" y="8" width="7.500" height="2.500" fill="#37a032"/><path d="M7.600 6.400l3 2.900-3 1.700z" fill="#37a032"/><path d="M3.100 4l2 1.500-2 1.500z" fill="#a8e0a0"/></svg>
<svg style="left:1021.300px;top:330.7px" width="12.200" height="12.800" viewBox="0 0 12 13"><path d="M1 1h7l3 3v8H1z" fill="#a8b6f0" stroke="#666c92" stroke-width="1.400"/><path d="M7.500 0.500l4 4h-4z" fill="#3c3c50"/><circle cx="6" cy="7.300" r="2.700" fill="#e8ecff" stroke="#4a5ee0" stroke-width="1.500"/><circle cx="6" cy="7.300" r="0.900" fill="#4a5ee0"/></svg>
<svg style="left:31.2px;top:362.7px" width="10.200" height="10.200" viewBox="0 0 10 10"><rect x="0.300" y="0.300" width="9.400" height="9.400" rx="1.600" fill="#636363"/><path d="M2.200 5.200l2 2.100 3.700-4.600" fill="none" stroke="#fff" stroke-width="1.700"/></svg>
<svg style="left:54.3px;top:360.2px" width="12.700" height="12.800" viewBox="0 0 12 12"><rect x="0.200" y="0.200" width="11.600" height="11.600" rx="1.800" fill="#454548"/><rect x="1.200" y="1.200" width="4.300" height="9.600" fill="#3a5aa0"/><rect x="6.500" y="1.200" width="4.300" height="9.600" fill="#7a7440"/><rect x="1.200" y="7.500" width="9.600" height="3.300" fill="#2e2e32"/><path d="M3.300 9.600L6 2.300l2.700 7.300L6 8.200z" fill="#fff"/></svg>
<span class="t tc" style="left:85.7px;top:354.3px;">02 D - BW - Site</span>
<span class="t tc" style="left:85.7px;top:368.6px;">Plan B.pdf</span>
<span class="t tc" style="left:178.2px;top:361.4px;">541 KB</span>
<span class="t tc" style="left:220.3px;top:361.4px;">1</span>
<span class="t tc" style="left:250px;top:361.4px;">36" x 24"</span>
<span class="t tc" style="left:322.2px;top:361.4px;">36" x 24"</span>
<span class="t tc" style="left:393.6px;top:361.4px;">1 x 1</span>
<span class="t tc" style="left:434.7px;top:361.4px;">Bond</span>
<span class="t tc" style="left:476.7px;top:361.4px;">100.00 %</span>
<svg style="left:527px;top:361.1px" width="15" height="11" viewBox="0 0 15 11"><text x="0" y="8.500" font-family="Liberation Sans,sans-serif" font-size="8" font-weight="bold" fill="#9a9aa2" transform="translate(5.500 0) scale(-1 1)">R</text><path d="M6.700 0v11" stroke="#222" stroke-width="1.300"/><circle cx="10.900" cy="6" r="1.900" fill="#d8486a"/></svg>
<svg style="left:559.500px;top:362.6px" width="9" height="9" viewBox="0 0 9 9"><circle cx="4.500" cy="4.500" r="3.900" fill="#fff" stroke="#b5b5b5" stroke-width="0.900"/><circle cx="4.500" cy="4.500" r="1.500" fill="#333"/></svg>
<span class="t tc" style="left:589.7px;top:361.4px;">CAD</span>
<span class="t tc" style="left:640.9px;top:361.4px;">No Stamp</span>
<span class="t tc" style="left:692.3px;top:361.4px;">Auto</span>
<span class="t tc" style="left:742.9px;top:361.4px;">No folding</span>
<span class="t tc" style="left:794.7px;top:361.4px;">Default</span>
<span class="t tc" style="left:846px;top:361.4px;">Default</span>
<span class="t tc" style="left:897.6px;top:361.4px;">Auto</span>
<span class="t tc" style="left:938.6px;top:361.4px;">On Printer</span>
<svg style="left:991px;top:361.2px" width="11" height="11.400" viewBox="0 0 11 11" preserveAspectRatio="none"><path d="M0.500 0.500h6.500l3.500 3.500v6.500h-10z" fill="#eef6ec" stroke="#a8b4a8" stroke-width="0.800"/><path d="M6.300 0.200l4.500 4.500h-2.800l-1.700-1.700z" fill="#3a3a3a"/><rect x="0.600" y="2.800" width="2.500" height="7.600" fill="#4fb348"/><path d="M0 3.600l1.900-3 1.900 3z" fill="#4fb348"/><rect x="0.600" y="8" width="7.500" height="2.500" fill="#37a032"/><path d="M7.600 6.400l3 2.900-3 1.700z" fill="#37a032"/><path d="M3.100 4l2 1.500-2 1.500z" fill="#a8e0a0"/></svg>
<svg style="left:1021.300px;top:360.2px" width="12.200" height="12.800" viewBox="0 0 12 13"><path d="M1 1h7l3 3v8H1z" fill="#a8b6f0" stroke="#666c92" stroke-width="1.400"/><path d="M7.500 0.500l4 4h-4z" fill="#3c3c50"/><circle cx="6" cy="7.300" r="2.700" fill="#e8ecff" stroke="#4a5ee0" stroke-width="1.500"/><circle cx="6" cy="7.300" r="0.900" fill="#4a5ee0"/></svg>
<svg style="left:31.2px;top:392.6px" width="10.200" height="10.200" viewBox="0 0 10 10"><rect x="0.300" y="0.300" width="9.400" height="9.400" rx="1.600" fill="#636363"/><path d="M2.200 5.200l2 2.100 3.700-4.600" fill="none" stroke="#fff" stroke-width="1.700"/></svg>
<svg style="left:54.3px;top:390.1px" width="12.700" height="12.800" viewBox="0 0 12 12"><rect x="0.200" y="0.200" width="11.600" height="11.600" rx="1.800" fill="#454548"/><rect x="1.200" y="1.200" width="4.300" height="9.600" fill="#3a5aa0"/><rect x="6.500" y="1.200" width="4.300" height="9.600" fill="#7a7440"/><rect x="1.200" y="7.500" width="9.600" height="3.300" fill="#2e2e32"/><path d="M3.300 9.600L6 2.300l2.700 7.300L6 8.200z" fill="#fff"/></svg>
<span class="t tc" style="left:85.7px;top:384.2px;">03 D - CAD - 3D</span>
<span class="t tc" style="left:85.7px;top:398.4px;">CAD.pdf</span>
<span class="t tc" style="left:178.2px;top:391.3px;">2,870 KB</span>
<span class="t tc" style="left:220.3px;top:391.3px;">1</span>
<span class="t tc" style="left:250px;top:391.3px;">36" x 24"</span>
<span class="t tc" style="left:322.2px;top:391.3px;">36" x 24"</span>
<span class="t tc" style="left:393.6px;top:391.3px;">1 x 1</span>
<span class="t tc" style="left:434.7px;top:391.3px;">Bond</span>
<span class="t tc" style="left:476.7px;top:391.3px;">100.00 %</span>
<svg style="left:527px;top:391.0px" width="15" height="11" viewBox="0 0 15 11"><text x="0" y="8.500" font-family="Liberation Sans,sans-serif" font-size="8" font-weight="bold" fill="#9a9aa2" transform="translate(5.500 0) scale(-1 1)">R</text><path d="M6.700 0v11" stroke="#222" stroke-width="1.300"/><circle cx="10.900" cy="6" r="1.900" fill="#d8486a"/></svg>
<svg style="left:559.500px;top:392.5px" width="9" height="9" viewBox="0 0 9 9"><circle cx="4.500" cy="4.500" r="3.900" fill="#fff" stroke="#b5b5b5" stroke-width="0.900"/><circle cx="4.500" cy="4.500" r="1.500" fill="#333"/></svg>
<span class="t tc" style="left:589.7px;top:391.3px;">CAD</span>
<span class="t tc" style="left:640.9px;top:391.3px;">No Stamp</span>
<span class="t tc" style="left:692.3px;top:391.3px;">Auto</span>
<span class="t tc" style="left:742.9px;top:391.3px;">No folding</span>
<span class="t tc" style="left:794.7px;top:391.3px;">Default</span>
<span class="t tc" style="left:846px;top:391.3px;">Default</span>
<span class="t tc" style="left:897.6px;top:391.3px;">Auto</span>
<span class="t tc" style="left:938.6px;top:391.3px;">On Printer</span>
<svg style="left:991px;top:391.1px" width="11" height="11.400" viewBox="0 0 11 11" preserveAspectRatio="none"><path d="M0.500 0.500h6.500l3.500 3.500v6.500h-10z" fill="#eef6ec" stroke="#a8b4a8" stroke-width="0.800"/><path d="M6.300 0.200l4.500 4.500h-2.800l-1.700-1.700z" fill="#3a3a3a"/><rect x="0.600" y="2.800" width="2.500" height="7.600" fill="#4fb348"/><path d="M0 3.600l1.900-3 1.900 3z" fill="#4fb348"/><rect x="0.600" y="8" width="7.500" height="2.500" fill="#37a032"/><path d="M7.600 6.400l3 2.900-3 1.700z" fill="#37a032"/><path d="M3.100 4l2 1.500-2 1.500z" fill="#a8e0a0"/></svg>
<svg style="left:1021.300px;top:390.1px" width="12.200" height="12.800" viewBox="0 0 12 13"><path d="M1 1h7l3 3v8H1z" fill="#a8b6f0" stroke="#666c92" stroke-width="1.400"/><path d="M7.500 0.500l4 4h-4z" fill="#3c3c50"/><circle cx="6" cy="7.300" r="2.700" fill="#e8ecff" stroke="#4a5ee0" stroke-width="1.500"/><circle cx="6" cy="7.300" r="0.900" fill="#4a5ee0"/></svg>
<svg style="left:31.2px;top:423.6px" width="10.200" height="10.200" viewBox="0 0 10 10"><rect x="0.300" y="0.300" width="9.400" height="9.400" rx="1.600" fill="#636363"/><path d="M2.200 5.200l2 2.100 3.700-4.600" fill="none" stroke="#fff" stroke-width="1.700"/></svg>
<svg style="left:54.3px;top:421.1px" width="12.700" height="12.800" viewBox="0 0 12 12"><rect x="0.200" y="0.200" width="11.600" height="11.600" rx="1.800" fill="#454548"/><rect x="1.200" y="1.200" width="4.300" height="9.600" fill="#3a5aa0"/><rect x="6.500" y="1.200" width="4.300" height="9.600" fill="#7a7440"/><rect x="1.200" y="7.500" width="9.600" height="3.300" fill="#2e2e32"/><path d="M3.300 9.600L6 2.300l2.700 7.300L6 8.200z" fill="#fff"/></svg>
<span class="t tc" style="left:85.7px;top:415.2px;">04 D - CAD -</span>
<span class="t tc" style="left:85.7px;top:429.4px;">Contour.pdf</span>
<span class="t tc" style="left:178.2px;top:422.3px;">706 KB</span>
<span class="t tc" style="left:220.3px;top:422.3px;">1</span>
<span class="t tc" style="left:250px;top:422.3px;">36" x 24"</span>
<span class="t tc" style="left:322.2px;top:422.3px;">36" x 24"</span>
<span class="t tc" style="left:393.6px;top:422.3px;">1 x 1</span>
<span class="t tc" style="left:434.7px;top:422.3px;">Bond</span>
<span class="t tc" style="left:476.7px;top:422.3px;">100.00 %</span>
<svg style="left:527px;top:422.0px" width="15" height="11" viewBox="0 0 15 11"><text x="0" y="8.500" font-family="Liberation Sans,sans-serif" font-size="8" font-weight="bold" fill="#9a9aa2" transform="translate(5.500 0) scale(-1 1)">R</text><path d="M6.700 0v11" stroke="#222" stroke-width="1.300"/><circle cx="10.900" cy="6" r="1.900" fill="#d8486a"/></svg>
<svg style="left:559.500px;top:423.5px" width="9" height="9" viewBox="0 0 9 9"><circle cx="4.500" cy="4.500" r="3.900" fill="#fff" stroke="#b5b5b5" stroke-width="0.900"/><circle cx="4.500" cy="4.500" r="1.500" fill="#333"/></svg>
<span class="t tc" style="left:589.7px;top:422.3px;">CAD</span>
<span class="t tc" style="left:640.9px;top:422.3px;">No Stamp</span>
<span class="t tc" style="left:692.3px;top:422.3px;">Auto</span>
<span class="t tc" style="left:742.9px;top:422.3px;">No folding</span>
<span class="t tc" style="left:794.7px;top:422.3px;">Default</span>
<span class="t tc" style="left:846px;top:422.3px;">Default</span>
<span class="t tc" style="left:897.6px;top:422.3px;">Auto</span>
<span class="t tc" style="left:938.6px;top:422.3px;">On Printer</span>
<svg style="left:991px;top:422.1px" width="11" height="11.400" viewBox="0 0 11 11" preserveAspectRatio="none"><path d="M0.500 0.500h6.500l3.500 3.500v6.500h-10z" fill="#eef6ec" stroke="#a8b4a8" stroke-width="0.800"/><path d="M6.300 0.200l4.500 4.500h-2.800l-1.700-1.700z" fill="#3a3a3a"/><rect x="0.600" y="2.800" width="2.500" height="7.600" fill="#4fb348"/><path d="M0 3.600l1.900-3 1.900 3z" fill="#4fb348"/><rect x="0.600" y="8" width="7.500" height="2.500" fill="#37a032"/><path d="M7.600 6.400l3 2.900-3 1.700z" fill="#37a032"/><path d="M3.100 4l2 1.500-2 1.500z" fill="#a8e0a0"/></svg>
<svg style="left:1021.300px;top:421.1px" width="12.200" height="12.800" viewBox="0 0 12 13"><path d="M1 1h7l3 3v8H1z" fill="#a8b6f0" stroke="#666c92" stroke-width="1.400"/><path d="M7.500 0.500l4 4h-4z" fill="#3c3c50"/><circle cx="6" cy="7.300" r="2.700" fill="#e8ecff" stroke="#4a5ee0" stroke-width="1.500"/><circle cx="6" cy="7.300" r="0.900" fill="#4a5ee0"/></svg>
<svg style="left:31.2px;top:453.4px" width="10.200" height="10.200" viewBox="0 0 10 10"><rect x="0.300" y="0.300" width="9.400" height="9.400" rx="1.600" fill="#636363"/><path d="M2.200 5.200l2 2.100 3.700-4.600" fill="none" stroke="#fff" stroke-width="1.700"/></svg>
<svg style="left:54.3px;top:450.9px" width="12.700" height="12.800" viewBox="0 0 12 12"><rect x="0.200" y="0.200" width="11.600" height="11.600" rx="1.800" fill="#454548"/><rect x="1.200" y="1.200" width="4.300" height="9.600" fill="#3a5aa0"/><rect x="6.500" y="1.200" width="4.300" height="9.600" fill="#7a7440"/><rect x="1.200" y="7.500" width="9.600" height="3.300" fill="#2e2e32"/><path d="M3.300 9.600L6 2.300l2.700 7.300L6 8.200z" fill="#fff"/></svg>
<span class="t tc" style="left:85.7px;top:445.0px;">05 D - CAD -</span>
<span class="t tc" style="left:85.7px;top:459.2px;">GIS.pdf</span>
<span class="t tc" style="left:178.2px;top:452.1px;">872 KB</span>
<span class="t tc" style="left:220.3px;top:452.1px;">1</span>
<span class="t tc" style="left:250px;top:452.1px;">36" x 24"</span>
<span class="t tc" style="left:322.2px;top:452.1px;">36" x 24"</span>
<span class="t tc" style="left:393.6px;top:452.1px;">1 x 1</span>
<span class="t tc" style="left:434.7px;top:452.1px;">Bond</span>
<span class="t tc" style="left:476.7px;top:452.1px;">100.00 %</span>
<svg style="left:527px;top:451.8px" width="15" height="11" viewBox="0 0 15 11"><text x="0" y="8.500" font-family="Liberation Sans,sans-serif" font-size="8" font-weight="bold" fill="#9a9aa2" transform="translate(5.500 0) scale(-1 1)">R</text><path d="M6.700 0v11" stroke="#222" stroke-width="1.300"/><circle cx="10.900" cy="6" r="1.900" fill="#d8486a"/></svg>
<svg style="left:559.500px;top:453.3px" width="9" height="9" viewBox="0 0 9 9"><circle cx="4.500" cy="4.500" r="3.900" fill="#fff" stroke="#b5b5b5" stroke-width="0.900"/><circle cx="4.500" cy="4.500" r="1.500" fill="#333"/></svg>
<span class="t tc" style="left:589.7px;top:452.1px;">CAD</span>
<span class="t tc" style="left:640.9px;top:452.1px;">No Stamp</span>
<span class="t tc" style="left:692.3px;top:452.1px;">Auto</span>
<span class="t tc" style="left:742.9px;top:452.1px;">No folding</span>
<span class="t tc" style="left:794.7px;top:452.1px;">Default</span>
<span class="t tc" style="left:846px;top:452.1px;">Default</span>
<span class="t tc" style="left:897.6px;top:452.1px;">Auto</span>
<span class="t tc" style="left:938.6px;top:452.1px;">On Printer</span>
<svg style="left:991px;top:451.9px" width="11" height="11.400" viewBox="0 0 11 11" preserveAspectRatio="none"><path d="M0.500 0.500h6.500l3.500 3.500v6.500h-10z" fill="#eef6ec" stroke="#a8b4a8" stroke-width="0.800"/><path d="M6.300 0.200l4.500 4.500h-2.800l-1.700-1.700z" fill="#3a3a3a"/><rect x="0.600" y="2.800" width="2.500" height="7.600" fill="#4fb348"/><path d="M0 3.600l1.900-3 1.900 3z" fill="#4fb348"/><rect x="0.600" y="8" width="7.500" height="2.500" fill="#37a032"/><path d="M7.600 6.400l3 2.900-3 1.700z" fill="#37a032"/><path d="M3.100 4l2 1.500-2 1.500z" fill="#a8e0a0"/></svg>
<svg style="left:1021.300px;top:450.9px" width="12.200" height="12.800" viewBox="0 0 12 13"><path d="M1 1h7l3 3v8H1z" fill="#a8b6f0" stroke="#666c92" stroke-width="1.400"/><path d="M7.500 0.500l4 4h-4z" fill="#3c3c50"/><circle cx="6" cy="7.300" r="2.700" fill="#e8ecff" stroke="#4a5ee0" stroke-width="1.500"/><circle cx="6" cy="7.300" r="0.900" fill="#4a5ee0"/></svg>
<svg style="left:31.2px;top:490.6px" width="10.200" height="10.200" viewBox="0 0 10 10"><rect x="0.300" y="0.300" width="9.400" height="9.400" rx="1.600" fill="#636363"/><path d="M2.200 5.200l2 2.100 3.700-4.600" fill="none" stroke="#fff" stroke-width="1.700"/></svg>
<svg style="left:54.3px;top:488.1px" width="12.700" height="12.800" viewBox="0 0 12 12"><rect x="0.200" y="0.200" width="11.600" height="11.600" rx="1.800" fill="#454548"/><rect x="1.200" y="1.200" width="4.300" height="9.600" fill="#3a5aa0"/><rect x="6.500" y="1.200" width="4.300" height="9.600" fill="#7a7440"/><rect x="1.200" y="7.500" width="9.600" height="3.300" fill="#2e2e32"/><path d="M3.300 9.600L6 2.300l2.700 7.300L6 8.200z" fill="#fff"/></svg>
<span class="t tc" style="left:85.7px;top:475.0px;">08 D - Graphics - 3D</span>
<span class="t tc" style="left:85.7px;top:489.3px;">Wireframe</span>
<span class="t tc" style="left:85.7px;top:503.6px;">Car(2).pdf</span>
<span class="t tc" style="left:178.2px;top:489.3px;">6,752 KB</span>
<span class="t tc" style="left:220.3px;top:489.3px;">1</span>
<span class="t tc" style="left:250px;top:489.3px;">36" x 24"</span>
<span class="t tc" style="left:322.2px;top:489.3px;">36" x 24"</span>
<span class="t tc" style="left:393.6px;top:489.3px;">1 x 1</span>
<span class="t tc" style="left:434.7px;top:489.3px;">Bond</span>
<span class="t tc" style="left:476.7px;top:489.3px;">100.00 %</span>
<svg style="left:527px;top:489.0px" width="15" height="11" viewBox="0 0 15 11"><text x="0" y="8.500" font-family="Liberation Sans,sans-serif" font-size="8" font-weight="bold" fill="#9a9aa2" transform="translate(5.500 0) scale(-1 1)">R</text><path d="M6.700 0v11" stroke="#222" stroke-width="1.300"/><circle cx="10.900" cy="6" r="1.900" fill="#d8486a"/></svg>
<svg style="left:559.500px;top:490.5px" width="9" height="9" viewBox="0 0 9 9"><circle cx="4.500" cy="4.500" r="3.900" fill="#fff" stroke="#b5b5b5" stroke-width="0.900"/><circle cx="4.500" cy="4.500" r="1.500" fill="#333"/></svg>
<span class="t tc" style="left:589.7px;top:489.3px;">CAD</span>
<span class="t tc" style="left:640.9px;top:489.3px;">No Stamp</span>
<span class="t tc" style="left:692.3px;top:489.3px;">Auto</span>
<span class="t tc" style="left:742.9px;top:489.3px;">No folding</span>
<span class="t tc" style="left:794.7px;top:489.3px;">Default</span>
<span class="t tc" style="left:846px;top:489.3px;">Default</span>
<span class="t tc" style="left:897.6px;top:489.3px;">Auto</span>
<span class="t tc" style="left:938.6px;top:489.3px;">On Printer</span>
<svg style="left:991px;top:489.1px" width="11" height="11.400" viewBox="0 0 11 11" preserveAspectRatio="none"><path d="M0.500 0.500h6.500l3.500 3.500v6.500h-10z" fill="#eef6ec" stroke="#a8b4a8" stroke-width="0.800"/><path d="M6.300 0.200l4.500 4.500h-2.800l-1.700-1.700z" fill="#3a3a3a"/><rect x="0.600" y="2.800" width="2.500" height="7.600" fill="#4fb348"/><path d="M0 3.600l1.900-3 1.900 3z" fill="#4fb348"/><rect x="0.600" y="8" width="7.500" height="2.500" fill="#37a032"/><path d="M7.600 6.400l3 2.900-3 1.700z" fill="#37a032"/><path d="M3.100 4l2 1.500-2 1.500z" fill="#a8e0a0"/></svg>
<svg style="left:1021.300px;top:488.1px" width="12.200" height="12.800" viewBox="0 0 12 13"><path d="M1 1h7l3 3v8H1z" fill="#a8b6f0" stroke="#666c92" stroke-width="1.400"/><path d="M7.500 0.500l4 4h-4z" fill="#3c3c50"/><circle cx="6" cy="7.300" r="2.700" fill="#e8ecff" stroke="#4a5ee0" stroke-width="1.500"/><circle cx="6" cy="7.300" r="0.900" fill="#4a5ee0"/></svg>
<svg style="left:31.2px;top:527.9px" width="10.200" height="10.200" viewBox="0 0 10 10"><rect x="0.300" y="0.300" width="9.400" height="9.400" rx="1.600" fill="#636363"/><path d="M2.200 5.200l2 2.100 3.700-4.600" fill="none" stroke="#fff" stroke-width="1.700"/></svg>
<svg style="left:54.3px;top:525.4px" width="12.700" height="12.800" viewBox="0 0 12 12"><rect x="0.200" y="0.200" width="11.600" height="11.600" rx="1.800" fill="#454548"/><rect x="1.200" y="1.200" width="4.300" height="9.600" fill="#3a5aa0"/><rect x="6.500" y="1.200" width="4.300" height="9.600" fill="#7a7440"/><rect x="1.200" y="7.500" width="9.600" height="3.300" fill="#2e2e32"/><path d="M3.300 9.600L6 2.300l2.700 7.300L6 8.200z" fill="#fff"/></svg>
<span class="t tc" style="left:85.7px;top:519.5px;">09 D - Graphics -</span>
<span class="t tc" style="left:85.7px;top:533.8px;">Aerial(2).pdf</span>
<span class="t tc" style="left:178.2px;top:519.5px;">10,330</span>
<span class="t tc" style="left:178.2px;top:533.8px;">KB</span>
<span class="t tc" style="left:220.3px;top:526.6px;">1</span>
<span class="t tc" style="left:250px;top:526.6px;">36" x 24"</span>
<span class="t tc" style="left:322.2px;top:526.6px;">36" x 24"</span>
<span class="t tc" style="left:393.6px;top:526.6px;">1 x 1</span>
<span class="t tc" style="left:434.7px;top:526.6px;">Bond</span>
<span class="t tc" style="left:476.7px;top:526.6px;">100.00 %</span>
<svg style="left:527px;top:526.3px" width="15" height="11" viewBox="0 0 15 11"><text x="0" y="8.500" font-family="Liberation Sans,sans-serif" font-size="8" font-weight="bold" fill="#9a9aa2" transform="translate(5.500 0) scale(-1 1)">R</text><path d="M6.700 0v11" stroke="#222" stroke-width="1.300"/><circle cx="10.900" cy="6" r="1.900" fill="#d8486a"/></svg>
<svg style="left:559.500px;top:527.8px" width="9" height="9" viewBox="0 0 9 9"><circle cx="4.500" cy="4.500" r="3.900" fill="#fff" stroke="#b5b5b5" stroke-width="0.900"/><circle cx="4.500" cy="4.500" r="1.500" fill="#333"/></svg>
<span class="t tc" style="left:589.7px;top:526.6px;">CAD</span>
<span class="t tc" style="left:640.9px;top:526.6px;">No Stamp</span>
<span class="t tc" style="left:692.3px;top:526.6px;">Auto</span>
<span class="t tc" style="left:742.9px;top:526.6px;">No folding</span>
<span class="t tc" style="left:794.7px;top:526.6px;">Default</span>
<span class="t tc" style="left:846px;top:526.6px;">Default</span>
<span class="t tc" style="left:897.6px;top:526.6px;">Auto</span>
<span class="t tc" style="left:938.6px;top:526.6px;">On Printer</span>
<svg style="left:991px;top:526.4px" width="11" height="11.400" viewBox="0 0 11 11" preserveAspectRatio="none"><path d="M0.500 0.500h6.500l3.500 3.500v6.500h-10z" fill="#eef6ec" stroke="#a8b4a8" stroke-width="0.800"/><path d="M6.300 0.200l4.500 4.500h-2.800l-1.700-1.700z" fill="#3a3a3a"/><rect x="0.600" y="2.800" width="2.500" height="7.600" fill="#4fb348"/><path d="M0 3.600l1.900-3 1.900 3z" fill="#4fb348"/><rect x="0.600" y="8" width="7.500" height="2.500" fill="#37a032"/><path d="M7.600 6.400l3 2.900-3 1.700z" fill="#37a032"/><path d="M3.100 4l2 1.500-2 1.500z" fill="#a8e0a0"/></svg>
<svg style="left:1021.300px;top:525.4px" width="12.200" height="12.800" viewBox="0 0 12 13"><path d="M1 1h7l3 3v8H1z" fill="#a8b6f0" stroke="#666c92" stroke-width="1.400"/><path d="M7.500 0.500l4 4h-4z" fill="#3c3c50"/><circle cx="6" cy="7.300" r="2.700" fill="#e8ecff" stroke="#4a5ee0" stroke-width="1.500"/><circle cx="6" cy="7.300" r="0.900" fill="#4a5ee0"/></svg>
<!-- bottom bar -->
<div style="left:7.200px;top:540.300px;width:1064.800px;height:11.200px;background:#0a64a0;"></div>
<div style="left:7.200px;top:551.300px;width:1064.800px;height:2.200px;background:#5aa6dc;"></div>
<div style="left:7.200px;top:553.500px;width:1064.800px;height:106.200px;background:#fff;"></div>
<div style="left:7.200px;top:553.500px;width:78.800px;height:106.200px;background:#0a64a0;"></div>
<div style="left:993px;top:553.500px;width:79px;height:106.200px;background:#0a64a0;"></div>
<div style="left:7.200px;top:540.300px;width:1px;height:119.400px;background:#3f8fd2;"></div>
<svg style="left:534px;top:542.500px" width="13" height="7" viewBox="0 0 13 7"><path d="M1 1l5.500 4.500L12 1" fill="none" stroke="#cfe6fa" stroke-width="1.500"/></svg>
<svg style="left:28.500px;top:590px" width="38" height="38" viewBox="0 0 38 38"><circle cx="19" cy="19" r="16.300" fill="#5b9dd6" stroke="#dff4ff" stroke-width="2.200"/><path d="M22.500 8.500L13.500 19l9 10.500-4.500-10.500z" fill="#fff"/></svg>
<svg style="left:1013.500px;top:590px" width="38" height="38" viewBox="0 0 38 38"><circle cx="19" cy="19" r="16.300" fill="#5b9dd6" stroke="#dff4ff" stroke-width="2.200"/><path d="M15.500 8.500L24.500 19l-9 10.500 4.500-10.500z" fill="#fff"/></svg>
<div style="left:102px;top:561px;width:97px;height:96px;background:#fff;border:1px solid #a4a4a4;"></div>
<svg style="left:112.3px;top:583.400px" width="77" height="51" viewBox="0 0 77 51"><rect x="0.300" y="0.300" width="55.400" height="49.900" fill="#fff" stroke="#a8a8a8" stroke-width="0.600"/><rect x="56.3" y="0.300" width="20.4" height="49.900" fill="#fff" stroke="#a8a8a8" stroke-width="0.600"/><ellipse cx="67.500" cy="14.500" rx="4.300" ry="2.300" fill="#eee" stroke="#8a8a8a" stroke-width="0.800"/><rect x="62" y="18.3" width="9.5" height="0.800" fill="#9a9a9a"/><rect x="62" y="20.2" width="11" height="0.800" fill="#9a9a9a"/><rect x="62" y="22.1" width="9.5" height="0.800" fill="#9a9a9a"/><rect x="62" y="24.0" width="11" height="0.800" fill="#9a9a9a"/><rect x="62" y="25.9" width="8" height="0.800" fill="#9a9a9a"/><rect x="62" y="27.8" width="8" height="0.800" fill="#9a9a9a"/><rect x="62" y="29.7" width="10" height="0.800" fill="#9a9a9a"/><rect x="62" y="31.6" width="11" height="0.800" fill="#9a9a9a"/><rect x="62" y="33.5" width="7" height="0.800" fill="#9a9a9a"/><rect x="62" y="35.4" width="7" height="0.800" fill="#9a9a9a"/><rect x="61" y="42" width="15" height="7.500" fill="#fff" stroke="#888" stroke-width="0.600"/><rect x="62.500" y="46.500" width="5" height="1.300" fill="#777"/><path d="M62 41l13-4.500" stroke="#555" stroke-width="1.300"/><path d="M62 39l13-4.500" stroke="#999" stroke-width="0.600"/><path d="M9 7h30v2h5v8h-2v14h2v12H9z" fill="#fff" stroke="#222" stroke-width="1"/><path d="M9 12.5h34" stroke="#333" stroke-width="0.8"/><path d="M9 18h34" stroke="#333" stroke-width="0.6"/><path d="M9 23.5h34" stroke="#333" stroke-width="0.8"/><path d="M9 29h34" stroke="#333" stroke-width="1"/><path d="M9 35h34" stroke="#333" stroke-width="0.6"/><path d="M14.5 7v36" stroke="#333" stroke-width="0.6"/><path d="M20 7v36" stroke="#333" stroke-width="1"/><path d="M25.5 7v36" stroke="#333" stroke-width="0.6"/><path d="M31 7v36" stroke="#333" stroke-width="0.8"/><path d="M37 7v36" stroke="#333" stroke-width="1"/><rect x="9.8" y="29.8" width="2" height="2" fill="#555"/><rect x="26.3" y="24.3" width="2" height="2" fill="#555"/><rect x="31.8" y="24.3" width="2" height="3.5" fill="#555"/><rect x="15.3" y="35.8" width="4" height="3.5" fill="#555"/><rect x="31.8" y="29.8" width="3" height="2" fill="#777"/><rect x="9.8" y="29.8" width="2" height="3" fill="#aaa"/><rect x="15.3" y="29.8" width="2" height="3.5" fill="#999"/><rect x="31.8" y="35.8" width="2" height="2" fill="#777"/><rect x="20.8" y="7.8" width="4" height="3.5" fill="#555"/><rect x="31.8" y="7.8" width="4" height="2" fill="#aaa"/><rect x="37.8" y="29.8" width="3" height="3" fill="#aaa"/><rect x="31.8" y="24.3" width="3" height="3" fill="#777"/><rect x="15.3" y="35.8" width="2" height="2" fill="#999"/><rect x="31.8" y="24.3" width="3" height="3.5" fill="#aaa"/><path d="M21 31.5h3.500M22.7 30v3.500" stroke="#333" stroke-width="0.500"/><path d="M10 9.5h3.500M11.7 8v3.500" stroke="#333" stroke-width="0.500"/><path d="M32 26.0h3.500M33.7 24.5v3.500" stroke="#333" stroke-width="0.500"/><path d="M15.5 20.5h3.500M17.2 19v3.500" stroke="#333" stroke-width="0.500"/><path d="M15.5 26.0h3.500M17.2 24.5v3.500" stroke="#333" stroke-width="0.500"/><path d="M26.5 9.5h3.500M28.2 8v3.500" stroke="#333" stroke-width="0.500"/><path d="M38 9.5h3.500M39.7 8v3.500" stroke="#333" stroke-width="0.500"/><path d="M32 31.5h3.500M33.7 30v3.500" stroke="#333" stroke-width="0.500"/><path d="M21 20.5h3.500M22.7 19v3.500" stroke="#333" stroke-width="0.500"/><path d="M38 20.5h3.500M39.7 19v3.500" stroke="#333" stroke-width="0.500"/><rect x="20" y="23.500" width="5.500" height="5.500" fill="#fff" stroke="#111" stroke-width="1"/><rect x="25.500" y="12.500" width="5.500" height="5.500" fill="#fff" stroke="#111" stroke-width="0.800"/></svg>
<div style="left:214.6px;top:561px;width:97px;height:96px;background:#fff;border:1px solid #a4a4a4;"></div>
<svg style="left:224.9px;top:583.400px" width="77" height="51" viewBox="0 0 77 51"><rect x="0.300" y="0.300" width="55.400" height="49.900" fill="#fff" stroke="#a8a8a8" stroke-width="0.600"/><rect x="56.3" y="0.300" width="20.4" height="49.900" fill="#fff" stroke="#a8a8a8" stroke-width="0.600"/><ellipse cx="67.500" cy="14.500" rx="4.300" ry="2.300" fill="#eee" stroke="#8a8a8a" stroke-width="0.800"/><rect x="62" y="18.3" width="10" height="0.800" fill="#9a9a9a"/><rect x="62" y="20.2" width="9" height="0.800" fill="#9a9a9a"/><rect x="62" y="22.1" width="7" height="0.800" fill="#9a9a9a"/><rect x="62" y="24.0" width="9" height="0.800" fill="#9a9a9a"/><rect x="62" y="25.9" width="9" height="0.800" fill="#9a9a9a"/><rect x="62" y="27.8" width="7" height="0.800" fill="#9a9a9a"/><rect x="62" y="29.7" width="7" height="0.800" fill="#9a9a9a"/><rect x="62" y="31.6" width="11" height="0.800" fill="#9a9a9a"/><rect x="62" y="33.5" width="11" height="0.800" fill="#9a9a9a"/><rect x="62" y="35.4" width="11" height="0.800" fill="#9a9a9a"/><rect x="61" y="42" width="15" height="7.500" fill="#fff" stroke="#888" stroke-width="0.600"/><rect x="62.500" y="46.500" width="5" height="1.300" fill="#777"/><path d="M62 41l13-4.500" stroke="#555" stroke-width="1.300"/><path d="M62 39l13-4.500" stroke="#999" stroke-width="0.600"/><rect x="8.7" y="31.3" width="1" height="2" fill="#bbb"/><rect x="36.1" y="36.9" width="1" height="0.6" fill="#888"/><rect x="20.9" y="27.0" width="2.5" height="0.6" fill="#aaa"/><rect x="38.3" y="9.7" width="0.8" height="2" fill="#888"/><rect x="44.5" y="22.9" width="0.8" height="2" fill="#888"/><rect x="29.1" y="36.8" width="2.5" height="1" fill="#888"/><rect x="47.4" y="29.6" width="2.5" height="0.8" fill="#aaa"/><rect x="9.5" y="10.4" width="0.8" height="0.6" fill="#888"/><rect x="40.9" y="11.6" width="1" height="0.6" fill="#aaa"/><rect x="23.6" y="18.3" width="1" height="0.8" fill="#777"/><rect x="45.9" y="28.6" width="0.6" height="2" fill="#777"/><rect x="22.5" y="19.4" width="0.6" height="2" fill="#888"/><rect x="8.6" y="7.4" width="0.8" height="2" fill="#aaa"/><rect x="10.6" y="26.6" width="0.6" height="0.6" fill="#777"/><rect x="12.4" y="8.7" width="1" height="0.6" fill="#999"/><rect x="42.7" y="27.1" width="0.8" height="1" fill="#bbb"/><rect x="31.3" y="22.1" width="0.6" height="2" fill="#888"/><rect x="26.2" y="16.2" width="0.8" height="0.6" fill="#bbb"/><rect x="37.1" y="22.2" width="0.8" height="0.6" fill="#aaa"/><rect x="45.9" y="24.0" width="0.8" height="0.6" fill="#777"/><rect x="18.5" y="28.1" width="0.6" height="1" fill="#777"/><rect x="21.4" y="11.0" width="0.8" height="1" fill="#aaa"/><rect x="31.8" y="33.4" width="0.8" height="0.8" fill="#888"/><rect x="37.1" y="13.2" width="2.5" height="1" fill="#999"/><rect x="47.6" y="33.4" width="2.5" height="1" fill="#aaa"/><rect x="35.1" y="39.4" width="2.5" height="1" fill="#bbb"/><rect x="9.4" y="8.7" width="2.5" height="0.8" fill="#bbb"/><rect x="14.6" y="27.5" width="0.6" height="2" fill="#bbb"/><rect x="39.6" y="8.1" width="0.6" height="2" fill="#aaa"/><rect x="26.1" y="11.4" width="1" height="0.6" fill="#888"/><rect x="25.5" y="31.8" width="0.6" height="0.8" fill="#aaa"/><rect x="47.7" y="6.0" width="2.5" height="0.8" fill="#777"/><rect x="40.7" y="40.3" width="1" height="0.8" fill="#777"/><rect x="29.0" y="5.8" width="0.6" height="0.8" fill="#888"/><rect x="47.4" y="12.0" width="0.8" height="0.6" fill="#bbb"/><rect x="14.9" y="23.0" width="1" height="1" fill="#777"/><rect x="23.6" y="9.7" width="1" height="2" fill="#777"/><rect x="40.2" y="23.6" width="0.8" height="0.8" fill="#777"/><rect x="27.4" y="36.4" width="0.8" height="0.6" fill="#aaa"/><rect x="13.2" y="22.0" width="0.6" height="0.6" fill="#bbb"/><rect x="34.7" y="24.1" width="2.5" height="0.6" fill="#777"/><rect x="8.4" y="11.9" width="0.6" height="0.6" fill="#777"/><rect x="25.0" y="6.0" width="0.6" height="2" fill="#bbb"/><rect x="31.7" y="23.2" width="0.8" height="1" fill="#888"/><rect x="27.3" y="34.1" width="0.8" height="1" fill="#777"/><rect x="43.5" y="12.3" width="2.5" height="0.8" fill="#888"/><rect x="11.1" y="20.9" width="0.6" height="0.8" fill="#888"/><rect x="9.1" y="29.1" width="0.6" height="0.8" fill="#bbb"/><rect x="12.0" y="36.8" width="2.5" height="0.8" fill="#999"/><rect x="22.7" y="22.5" width="0.8" height="0.8" fill="#888"/><rect x="47.8" y="19.5" width="2.5" height="0.8" fill="#bbb"/><rect x="19.4" y="31.0" width="0.6" height="1" fill="#777"/><rect x="25.3" y="30.3" width="2.5" height="1" fill="#777"/><rect x="32.2" y="23.4" width="0.6" height="0.6" fill="#aaa"/><rect x="46.8" y="8.8" width="1" height="1" fill="#999"/><rect x="44.0" y="11.5" width="0.8" height="2" fill="#bbb"/><rect x="23.0" y="24.3" width="2.5" height="1" fill="#999"/><rect x="17.7" y="33.8" width="0.8" height="2" fill="#999"/><rect x="17.3" y="5.6" width="0.6" height="1" fill="#999"/><rect x="31.5" y="13.0" width="1" height="0.6" fill="#888"/><rect x="6.5" y="40.8" width="2.5" height="1" fill="#777"/><rect x="11.4" y="24.0" width="0.8" height="0.6" fill="#aaa"/><rect x="17.0" y="11.5" width="1" height="1" fill="#777"/><rect x="37.9" y="15.4" width="0.8" height="1" fill="#bbb"/><rect x="39.8" y="40.8" width="0.6" height="0.6" fill="#999"/><rect x="36.8" y="24.8" width="0.8" height="2" fill="#aaa"/><rect x="45.3" y="8.8" width="2.5" height="2" fill="#777"/><rect x="41.1" y="19.2" width="1" height="0.8" fill="#aaa"/><rect x="20.4" y="35.0" width="0.8" height="2" fill="#bbb"/><rect x="47.2" y="35.1" width="0.6" height="0.6" fill="#bbb"/><path d="M19.5 9.2h5.3v3.5" fill="none" stroke="#777" stroke-width="0.600"/><path d="M23.2 23.2h2.2v2.7" fill="none" stroke="#777" stroke-width="0.600"/><path d="M19.8 13.8h6.8v5.9" fill="none" stroke="#777" stroke-width="0.600"/><path d="M15.4 29.2h3.5v3.4" fill="none" stroke="#888" stroke-width="0.600"/><path d="M17.4 9.8h3.4v4.6" fill="none" stroke="#999" stroke-width="0.600"/><path d="M21.1 8.1h3.3v2.4" fill="none" stroke="#aaa" stroke-width="0.600"/><path d="M22.9 16.7h3.5v4.5" fill="none" stroke="#888" stroke-width="0.600"/><path d="M22.9 19.6h5.8v4.6" fill="none" stroke="#aaa" stroke-width="0.600"/><path d="M26.8 23.9h4.5v3.1" fill="none" stroke="#999" stroke-width="0.600"/><path d="M11.0 26.4h6.5v4.5" fill="none" stroke="#999" stroke-width="0.600"/><path d="M30.0 24.6h4.8v5.3" fill="none" stroke="#888" stroke-width="0.600"/><path d="M28.2 20.8h6.5v4.7" fill="none" stroke="#999" stroke-width="0.600"/><path d="M11.9 8.9h5.2v5.8" fill="none" stroke="#aaa" stroke-width="0.600"/><path d="M28.4 20.3h5.1v4.5" fill="none" stroke="#999" stroke-width="0.600"/><path d="M20.8 8.1h6.0v5.0" fill="none" stroke="#888" stroke-width="0.600"/><path d="M24.5 9.5h5.7v3.0" fill="none" stroke="#888" stroke-width="0.600"/><path d="M11 12h9v-3h8v6h5v9h-7v5H14v-6h-3z" fill="none" stroke="#777" stroke-width="0.700"/><path d="M24 30h12" stroke="#666" stroke-width="0.800"/><rect x="46" y="36" width="8" height="11" fill="none" stroke="#999" stroke-width="0.500"/><path d="M46 39h8M46 42h8M46 45h8" stroke="#aaa" stroke-width="0.400"/></svg>
<div style="left:327.2px;top:561px;width:97px;height:96px;background:#c7e0f9;border:1px solid #9fb6d0;"></div>
<svg style="left:337.5px;top:583.400px" width="77" height="51" viewBox="0 0 77 51"><rect width="77" height="51" fill="#fff"/><ellipse cx="67.500" cy="14.500" rx="4.300" ry="2.300" fill="#e4e6f6" stroke="#8a90c0" stroke-width="0.800"/><rect x="62" y="18.3" width="8" height="0.800" fill="#9a9a9a"/><rect x="62" y="20.2" width="11" height="0.800" fill="#9a9a9a"/><rect x="62" y="22.1" width="7" height="0.800" fill="#9a9a9a"/><rect x="62" y="24.0" width="10" height="0.800" fill="#9a9a9a"/><rect x="62" y="25.9" width="8" height="0.800" fill="#9a9a9a"/><rect x="62" y="27.8" width="9.5" height="0.800" fill="#9a9a9a"/><rect x="62" y="29.7" width="7" height="0.800" fill="#9a9a9a"/><rect x="62" y="31.6" width="7" height="0.800" fill="#9a9a9a"/><rect x="62" y="33.5" width="9" height="0.800" fill="#9a9a9a"/><rect x="62" y="35.4" width="8" height="0.800" fill="#9a9a9a"/><rect x="61" y="42" width="15" height="7.500" fill="#fff" stroke="#888" stroke-width="0.600"/><rect x="62.500" y="46.500" width="5" height="1.300" fill="#777"/><rect x="62.0" y="40.3" width="1.600" height="1.600" fill="#e8d23a"/><rect x="63.8" y="39.8" width="1.600" height="1.600" fill="#d84a8a"/><rect x="65.6" y="39.2" width="1.600" height="1.600" fill="#3aa0d8"/><rect x="67.4" y="38.6" width="1.600" height="1.600" fill="#333"/><rect x="69.2" y="38.1" width="1.600" height="1.600" fill="#4ab04a"/><rect x="71.0" y="37.5" width="1.600" height="1.600" fill="#e08a3a"/><rect x="72.8" y="37.0" width="1.600" height="1.600" fill="#8a4ad0"/><circle cx="12" cy="17" r="3.500" fill="#fff" stroke="#999" stroke-width="1"/><path d="M8 13.500l8 7M8 20.500l8-7M12 5v8M9.500 5h5" stroke="#aaa" stroke-width="0.700"/><path d="M46 5v17M43.500 6h5M43.500 11h5M44 16.500h4M43.500 21h5" stroke="#999" stroke-width="1"/><rect x="44.300" y="11" width="3.400" height="8" fill="#b5b5b5"/><path d="M22 17h16" stroke="#c4c4c4" stroke-width="0.600" stroke-dasharray="2 1.500"/><ellipse cx="20" cy="32.500" rx="5.500" ry="4" fill="#d9b45a"/><circle cx="12" cy="37" r="6.500" fill="#7c7c7c"/><circle cx="12" cy="37" r="4" fill="#a8a8a8"/><circle cx="12" cy="37" r="1.800" fill="#555"/><circle cx="19" cy="41" r="5.500" fill="#6e6e6e"/><circle cx="19" cy="41" r="2.800" fill="#999"/><circle cx="19" cy="41" r="1.200" fill="#444"/><path d="M36 33l4-4 7 1 5 7-2 7-9 3-6-5z" fill="#6a6a6a"/><path d="M40 33l5-1 3 4-5 3z" fill="#c4c4c4"/><circle cx="37" cy="33" r="2" fill="#333"/><circle cx="47" cy="42" r="2.600" fill="#3a3a3a"/><circle cx="40" cy="43" r="2" fill="#444"/><path d="M44 28l4-2 2 3-3 2z" fill="#555"/></svg>
<div style="left:438.8px;top:561px;width:97px;height:96px;background:#fff;border:1px solid #a4a4a4;"></div>
<svg style="left:449.1px;top:583.400px" width="77" height="51" viewBox="0 0 77 51"><rect x="0.300" y="0.300" width="55.400" height="49.900" fill="#fff" stroke="#a8a8a8" stroke-width="0.600"/><rect x="56.3" y="0.300" width="20.4" height="49.900" fill="#fff" stroke="#a8a8a8" stroke-width="0.600"/><ellipse cx="67.500" cy="14.500" rx="4.300" ry="2.300" fill="#e4e6f6" stroke="#8a90c0" stroke-width="0.800"/><rect x="62" y="18.3" width="8" height="0.800" fill="#9a9a9a"/><rect x="62" y="20.2" width="11" height="0.800" fill="#9a9a9a"/><rect x="62" y="22.1" width="10" height="0.800" fill="#9a9a9a"/><rect x="62" y="24.0" width="7" height="0.800" fill="#9a9a9a"/><rect x="62" y="25.9" width="8" height="0.800" fill="#9a9a9a"/><rect x="62" y="27.8" width="7" height="0.800" fill="#9a9a9a"/><rect x="62" y="29.7" width="9" height="0.800" fill="#9a9a9a"/><rect x="62" y="31.6" width="7" height="0.800" fill="#9a9a9a"/><rect x="62" y="33.5" width="11" height="0.800" fill="#9a9a9a"/><rect x="62" y="35.4" width="10" height="0.800" fill="#9a9a9a"/><rect x="61" y="42" width="15" height="7.500" fill="#fff" stroke="#888" stroke-width="0.600"/><rect x="62.500" y="46.500" width="5" height="1.300" fill="#777"/><rect x="62.0" y="40.3" width="1.600" height="1.600" fill="#e8d23a"/><rect x="63.8" y="39.8" width="1.600" height="1.600" fill="#d84a8a"/><rect x="65.6" y="39.2" width="1.600" height="1.600" fill="#3aa0d8"/><rect x="67.4" y="38.6" width="1.600" height="1.600" fill="#333"/><rect x="69.2" y="38.1" width="1.600" height="1.600" fill="#4ab04a"/><rect x="71.0" y="37.5" width="1.600" height="1.600" fill="#e08a3a"/><rect x="72.8" y="37.0" width="1.600" height="1.600" fill="#8a4ad0"/><path d="M2 12q8-6 16-4t14-1 10-3 12 1v10q-10-3-22 0t-30 2z" fill="#ececec"/><path d="M2 14.0q12-3 24-2t28-3" fill="none" stroke="#bbb" stroke-width="0.500"/><path d="M2 16.3q12-4 24-3t28-5" fill="none" stroke="#999" stroke-width="0.500"/><path d="M2 18.6q12-5 24-4t28-3" fill="none" stroke="#999" stroke-width="0.500"/><path d="M2 20.9q12-3 24-5t28-5" fill="none" stroke="#999" stroke-width="0.500"/><path d="M2 23.2q12-4 24-2t28-3" fill="none" stroke="#bbb" stroke-width="0.500"/><path d="M2 25.5q12-5 24-3t28-5" fill="none" stroke="#aaa" stroke-width="0.500"/><path d="M2 27.8q12-3 24-4t28-3" fill="none" stroke="#a8b8d8" stroke-width="0.500"/><path d="M2 30q20 6 52-2" fill="none" stroke="#c8c8c8" stroke-width="0.500"/><path d="M2 36h52" stroke="#ccc" stroke-width="0.400"/><path d="M38 6q4-4 8-1t6 1-2 5-6-1-6-4z" fill="none" stroke="#7a9ae0" stroke-width="0.700"/><path d="M42 13q5 3 10 0" fill="none" stroke="#7a9ae0" stroke-width="0.600"/><rect x="26" y="15.500" width="3.500" height="1.300" fill="#777"/><rect x="33" y="15" width="6" height="1.500" fill="#666"/><rect x="5" y="39" width="6" height="1" fill="#e08a8a"/><rect x="5" y="42" width="5" height="1" fill="#e08a8a"/><rect x="12" y="38" width="4" height="4" fill="#888"/><rect x="17" y="40" width="5" height="1" fill="#999"/><rect x="27" y="39" width="6" height="1" fill="#e08a8a"/><rect x="27" y="44" width="5" height="1" fill="#8ad0a8"/><rect x="35" y="39" width="6" height="1.200" fill="#888"/><rect x="35" y="42" width="7" height="1" fill="#aaa"/><rect x="35" y="44.500" width="5" height="1" fill="#aaa"/></svg>
<div style="left:551.2px;top:561px;width:97px;height:96px;background:#fff;border:1px solid #a4a4a4;"></div>
<svg style="left:561.5px;top:583.400px" width="77" height="51" viewBox="0 0 77 51"><rect x="0.300" y="0.300" width="55.400" height="49.900" fill="#fff" stroke="#a8a8a8" stroke-width="0.600"/><rect x="56.3" y="0.300" width="20.4" height="49.900" fill="#fff" stroke="#a8a8a8" stroke-width="0.600"/><ellipse cx="67.500" cy="14.500" rx="4.300" ry="2.300" fill="#e4e6f6" stroke="#8a90c0" stroke-width="0.800"/><rect x="62" y="18.3" width="8" height="0.800" fill="#9a9a9a"/><rect x="62" y="20.2" width="9.5" height="0.800" fill="#9a9a9a"/><rect x="62" y="22.1" width="9" height="0.800" fill="#9a9a9a"/><rect x="62" y="24.0" width="10" height="0.800" fill="#9a9a9a"/><rect x="62" y="25.9" width="8" height="0.800" fill="#9a9a9a"/><rect x="62" y="27.8" width="11" height="0.800" fill="#9a9a9a"/><rect x="62" y="29.7" width="8" height="0.800" fill="#9a9a9a"/><rect x="62" y="31.6" width="10" height="0.800" fill="#9a9a9a"/><rect x="62" y="33.5" width="11" height="0.800" fill="#9a9a9a"/><rect x="62" y="35.4" width="8" height="0.800" fill="#9a9a9a"/><rect x="61" y="42" width="15" height="7.500" fill="#fff" stroke="#888" stroke-width="0.600"/><rect x="62.500" y="46.500" width="5" height="1.300" fill="#777"/><rect x="62.0" y="40.3" width="1.600" height="1.600" fill="#e8d23a"/><rect x="63.8" y="39.8" width="1.600" height="1.600" fill="#d84a8a"/><rect x="65.6" y="39.2" width="1.600" height="1.600" fill="#3aa0d8"/><rect x="67.4" y="38.6" width="1.600" height="1.600" fill="#333"/><rect x="69.2" y="38.1" width="1.600" height="1.600" fill="#4ab04a"/><rect x="71.0" y="37.5" width="1.600" height="1.600" fill="#e08a3a"/><rect x="72.8" y="37.0" width="1.600" height="1.600" fill="#8a4ad0"/><rect x="29" y="2.500" width="5" height="1.600" fill="#666"/><rect x="25" y="5.300" width="13" height="0.700" fill="#aaa"/><rect x="46" y="4.0" width="7" height="0.600" fill="#aaa"/><rect x="46" y="6.3" width="7" height="0.600" fill="#aaa"/><rect x="46" y="8.6" width="6" height="0.600" fill="#aaa"/><rect x="46" y="10.9" width="6" height="0.600" fill="#aaa"/><rect x="46" y="13.2" width="6" height="0.600" fill="#aaa"/><rect x="46" y="15.5" width="6" height="0.600" fill="#aaa"/><path d="M19 13v8M30 17v7" stroke="#b06060" stroke-width="0.700"/><path d="M14 19h8" stroke="#bbb" stroke-width="0.400"/><path d="M1 24q8-2 16-2t12 3 10 1 16-2v6H1z" fill="#f6d4d4"/><path d="M1 24q8-2 16-2t12 3 10 1 16-2" fill="none" stroke="#d05a5a" stroke-width="0.800"/><path d="M1 27.500h54" stroke="#e09090" stroke-width="0.500"/><rect x="39" y="25" width="3.500" height="2.500" fill="#d03a3a"/><path d="M1 30h54" stroke="#e8b0b0" stroke-width="0.400" stroke-dasharray="1.500 1"/><path d="M5.0 31v11" stroke="#ecc8c8" stroke-width="0.500"/><path d="M10.3 31v11" stroke="#ecc8c8" stroke-width="0.500"/><path d="M15.6 31v11" stroke="#ecc8c8" stroke-width="0.500"/><path d="M20.9 31v11" stroke="#ecc8c8" stroke-width="0.500"/><path d="M26.2 31v11" stroke="#ecc8c8" stroke-width="0.500"/><path d="M31.5 31v11" stroke="#ecc8c8" stroke-width="0.500"/><path d="M36.8 31v11" stroke="#ecc8c8" stroke-width="0.500"/><path d="M42.1 31v11" stroke="#ecc8c8" stroke-width="0.500"/><path d="M47.4 31v11" stroke="#ecc8c8" stroke-width="0.500"/><path d="M52.7 31v11" stroke="#ecc8c8" stroke-width="0.500"/><rect x="1" y="43" width="54" height="3" fill="#b4e880"/><rect x="1" y="46" width="54" height="3.500" fill="#8cd860"/><path d="M30 46q3-4 6 0" fill="#fff" stroke="#5aa83a" stroke-width="0.500"/></svg>
<div style="left:663.8px;top:561px;width:97px;height:96px;background:#fff;border:1px solid #a4a4a4;"></div>
<svg style="left:674.1px;top:583.400px" width="77" height="51" viewBox="0 0 77 51"><rect x="0.300" y="0.300" width="55.400" height="49.900" fill="#fff" stroke="#a8a8a8" stroke-width="0.600"/><rect x="56.3" y="0.300" width="20.4" height="49.900" fill="#fff" stroke="#a8a8a8" stroke-width="0.600"/><ellipse cx="67.500" cy="14.500" rx="4.300" ry="2.300" fill="#e4e6f6" stroke="#8a90c0" stroke-width="0.800"/><rect x="62" y="18.3" width="9.5" height="0.800" fill="#9a9a9a"/><rect x="62" y="20.2" width="8" height="0.800" fill="#9a9a9a"/><rect x="62" y="22.1" width="10" height="0.800" fill="#9a9a9a"/><rect x="62" y="24.0" width="7" height="0.800" fill="#9a9a9a"/><rect x="62" y="25.9" width="7" height="0.800" fill="#9a9a9a"/><rect x="62" y="27.8" width="7" height="0.800" fill="#9a9a9a"/><rect x="62" y="29.7" width="10" height="0.800" fill="#9a9a9a"/><rect x="62" y="31.6" width="10" height="0.800" fill="#9a9a9a"/><rect x="62" y="33.5" width="10" height="0.800" fill="#9a9a9a"/><rect x="62" y="35.4" width="8" height="0.800" fill="#9a9a9a"/><rect x="61" y="42" width="15" height="7.500" fill="#fff" stroke="#888" stroke-width="0.600"/><rect x="62.500" y="46.500" width="5" height="1.300" fill="#777"/><rect x="62.0" y="40.3" width="1.600" height="1.600" fill="#e8d23a"/><rect x="63.8" y="39.8" width="1.600" height="1.600" fill="#d84a8a"/><rect x="65.6" y="39.2" width="1.600" height="1.600" fill="#3aa0d8"/><rect x="67.4" y="38.6" width="1.600" height="1.600" fill="#333"/><rect x="69.2" y="38.1" width="1.600" height="1.600" fill="#4ab04a"/><rect x="71.0" y="37.5" width="1.600" height="1.600" fill="#e08a3a"/><rect x="72.8" y="37.0" width="1.600" height="1.600" fill="#8a4ad0"/><ellipse cx="12" cy="9" rx="7.500" ry="4" fill="#eef3fd" stroke="#5a86dc" stroke-width="0.900"/><rect x="7" y="8" width="10" height="2.200" fill="#5a86dc"/><path d="M5.500 6.500q6.500-5 13 0" fill="none" stroke="#5a86dc" stroke-width="0.800"/><path d="M7 16l3-1 1 2-3 1zM12 15.500l3-.5.500 2.500-3 .5zM8 20h8l1 3H9z" fill="#5a5a5a"/><ellipse cx="38.1" cy="7.6" rx="2.0" ry="2.0" fill="#d8b040" transform="rotate(19 38.1 7.6)"/><ellipse cx="41.7" cy="5.4" rx="2.8" ry="2.0" fill="#d8b040" transform="rotate(154 41.7 5.4)"/><ellipse cx="48.1" cy="11.6" rx="3.7" ry="1.7" fill="#d8b040" transform="rotate(127 48.1 11.6)"/><ellipse cx="50.2" cy="11.3" rx="1.6" ry="0.8" fill="#e8c860" transform="rotate(174 50.2 11.3)"/><ellipse cx="38.2" cy="8.1" rx="1.9" ry="1.2" fill="#8a6a1a" transform="rotate(30 38.2 8.1)"/><ellipse cx="46.3" cy="17.3" rx="1.8" ry="2.0" fill="#6a4a10" transform="rotate(3 46.3 17.3)"/><ellipse cx="50.3" cy="7.9" rx="2.4" ry="1.3" fill="#a07a20" transform="rotate(19 50.3 7.9)"/><ellipse cx="35.7" cy="10.3" rx="2.2" ry="0.9" fill="#b8902a" transform="rotate(13 35.7 10.3)"/><ellipse cx="48.5" cy="7.9" rx="3.8" ry="1.1" fill="#8a6a1a" transform="rotate(111 48.5 7.9)"/><ellipse cx="39.8" cy="6.2" rx="2.4" ry="2.0" fill="#b8902a" transform="rotate(161 39.8 6.2)"/><ellipse cx="36.8" cy="17.9" rx="2.9" ry="1.1" fill="#b8902a" transform="rotate(12 36.8 17.9)"/><ellipse cx="51.2" cy="10.0" rx="3.0" ry="1.0" fill="#8a6a1a" transform="rotate(124 51.2 10.0)"/><ellipse cx="29.4" cy="11.0" rx="2.4" ry="1.2" fill="#6a4a10" transform="rotate(167 29.4 11.0)"/><ellipse cx="33.0" cy="14.2" rx="2.3" ry="1.5" fill="#e8c860" transform="rotate(30 33.0 14.2)"/><ellipse cx="30.5" cy="5.7" rx="2.0" ry="2.0" fill="#e8c860" transform="rotate(140 30.5 5.7)"/><ellipse cx="29.8" cy="6.3" rx="1.7" ry="1.2" fill="#b8902a" transform="rotate(81 29.8 6.3)"/><ellipse cx="32.5" cy="7.4" rx="2.9" ry="2.0" fill="#6a4a10" transform="rotate(105 32.5 7.4)"/><ellipse cx="36.3" cy="15.7" rx="2.0" ry="1.2" fill="#b8902a" transform="rotate(127 36.3 15.7)"/><ellipse cx="29.4" cy="11.6" rx="3.1" ry="1.9" fill="#d8b040" transform="rotate(23 29.4 11.6)"/><ellipse cx="33.3" cy="7.2" rx="2.5" ry="1.4" fill="#8a6a1a" transform="rotate(5 33.3 7.2)"/><ellipse cx="29.4" cy="10.2" rx="3.4" ry="1.8" fill="#a07a20" transform="rotate(125 29.4 10.2)"/><ellipse cx="32.7" cy="4.9" rx="1.9" ry="1.5" fill="#6a4a10" transform="rotate(27 32.7 4.9)"/><ellipse cx="43.5" cy="16.0" rx="2.6" ry="1.5" fill="#b8902a" transform="rotate(0 43.5 16.0)"/><ellipse cx="47.1" cy="7.0" rx="3.8" ry="1.6" fill="#8a6a1a" transform="rotate(32 47.1 7.0)"/><ellipse cx="42.9" cy="12.0" rx="2.6" ry="1.8" fill="#b8902a" transform="rotate(18 42.9 12.0)"/><ellipse cx="31.2" cy="7.4" rx="3.5" ry="0.8" fill="#a07a20" transform="rotate(77 31.2 7.4)"/><ellipse cx="34.5" cy="17.3" rx="2.1" ry="1.5" fill="#a07a20" transform="rotate(63 34.5 17.3)"/><ellipse cx="26.8" cy="10.0" rx="3.1" ry="0.9" fill="#d8b040" transform="rotate(127 26.8 10.0)"/><ellipse cx="49.9" cy="14.0" rx="1.7" ry="1.1" fill="#e8c860" transform="rotate(94 49.9 14.0)"/><ellipse cx="35.1" cy="10.1" rx="3.2" ry="1.1" fill="#8a6a1a" transform="rotate(129 35.1 10.1)"/><ellipse cx="27.8" cy="11.4" rx="2.0" ry="1.8" fill="#d8b040" transform="rotate(59 27.8 11.4)"/><ellipse cx="38.6" cy="7.5" rx="3.7" ry="0.9" fill="#a07a20" transform="rotate(126 38.6 7.5)"/><ellipse cx="42.5" cy="18.2" rx="2.7" ry="2.0" fill="#b8902a" transform="rotate(152 42.5 18.2)"/><ellipse cx="30.0" cy="9.7" rx="2.0" ry="2.1" fill="#d8b040" transform="rotate(106 30.0 9.7)"/><ellipse cx="36.6" cy="18.3" rx="3.7" ry="1.8" fill="#b8902a" transform="rotate(42 36.6 18.3)"/><ellipse cx="34.9" cy="6.2" rx="3.8" ry="1.8" fill="#b8902a" transform="rotate(79 34.9 6.2)"/><ellipse cx="43.9" cy="9.4" rx="2.4" ry="1.2" fill="#d8b040" transform="rotate(27 43.9 9.4)"/><ellipse cx="31.6" cy="9.1" rx="3.6" ry="1.9" fill="#e8c860" transform="rotate(22 31.6 9.1)"/><ellipse cx="27.3" cy="11.0" rx="2.4" ry="2.0" fill="#d8b040" transform="rotate(82 27.3 11.0)"/><ellipse cx="35.8" cy="18.2" rx="1.6" ry="1.3" fill="#6a4a10" transform="rotate(103 35.8 18.2)"/><ellipse cx="32.9" cy="15.7" rx="3.7" ry="1.2" fill="#8a6a1a" transform="rotate(85 32.9 15.7)"/><path d="M4 41q0-6 4-8l4-3h12l4 3q4 1 4 6v3H4z" fill="#d4d4d8"/><path d="M9 33.500l4-3h10l4 3z" fill="#4a4a54"/><path d="M14 35h16q2 1 2 4v2.500H13z" fill="#b02a30"/><path d="M4 37h10v5H4z" fill="#e8e8ea"/><circle cx="10" cy="43" r="2.400" fill="#2a2a2a"/><circle cx="27" cy="43" r="2.400" fill="#2a2a2a"/><path d="M4 44.500h29" stroke="#aaa" stroke-width="0.800"/><path d="M40 42v-6a5 5 0 0 1 10 0v6z" fill="#8a8a8a"/><path d="M42.800 42v-5.500a2.200 2.200 0 0 1 4.400 0v5.500z" fill="#fff"/><path d="M39 41.500h12l1 3H38z" fill="#9a9a9a"/></svg>
<div style="left:775.4px;top:561px;width:97px;height:96px;background:#fff;border:1px solid #a4a4a4;"></div>
<svg style="left:785.7px;top:583.400px" width="77" height="51" viewBox="0 0 77 51"><rect width="56" height="50.500" fill="#fff"/><rect x="59.8" y="0.300" width="16.9" height="49.900" fill="#fff" stroke="#a8a8a8" stroke-width="0.600"/><ellipse cx="67.500" cy="14.500" rx="4.300" ry="2.300" fill="#e4e6f6" stroke="#8a90c0" stroke-width="0.800"/><rect x="62" y="18.3" width="7" height="0.800" fill="#9a9a9a"/><rect x="62" y="20.2" width="9.5" height="0.800" fill="#9a9a9a"/><rect x="62" y="22.1" width="7" height="0.800" fill="#9a9a9a"/><rect x="62" y="24.0" width="8" height="0.800" fill="#9a9a9a"/><rect x="62" y="25.9" width="8" height="0.800" fill="#9a9a9a"/><rect x="62" y="27.8" width="9" height="0.800" fill="#9a9a9a"/><rect x="62" y="29.7" width="8" height="0.800" fill="#9a9a9a"/><rect x="62" y="31.6" width="11" height="0.800" fill="#9a9a9a"/><rect x="62" y="33.5" width="7" height="0.800" fill="#9a9a9a"/><rect x="62" y="35.4" width="11" height="0.800" fill="#9a9a9a"/><rect x="61" y="42" width="15" height="7.500" fill="#fff" stroke="#888" stroke-width="0.600"/><rect x="62.500" y="46.500" width="5" height="1.300" fill="#777"/><rect x="62.0" y="40.3" width="1.600" height="1.600" fill="#e8d23a"/><rect x="63.8" y="39.8" width="1.600" height="1.600" fill="#d84a8a"/><rect x="65.6" y="39.2" width="1.600" height="1.600" fill="#3aa0d8"/><rect x="67.4" y="38.6" width="1.600" height="1.600" fill="#333"/><rect x="69.2" y="38.1" width="1.600" height="1.600" fill="#4ab04a"/><rect x="71.0" y="37.5" width="1.600" height="1.600" fill="#e08a3a"/><rect x="72.8" y="37.0" width="1.600" height="1.600" fill="#8a4ad0"/><defs><filter id="tb" x="0" y="0" width="100%" height="100%" color-interpolation-filters="sRGB"><feTurbulence type="fractalNoise" baseFrequency="0.160 0.200" numOctaves="4" seed="11"/><feColorMatrix type="matrix" values="1.050 0 0 0 -0.150  0.950 0 0 0 -0.140  0.880 0 0 0 -0.130  0 0 0 0 1"/></filter></defs><rect x="1" y="0.500" width="58.500" height="48.500" fill="#5c4e48"/><rect x="1" y="0.500" width="58.500" height="48.500" filter="url(#tb)"/><path d="M1 22q14-10 26 0t32 6" fill="none" stroke="#2e2622" stroke-width="5" opacity="0.450"/><path d="M6 44q12-10 22-6t20-6" fill="none" stroke="#b8a69a" stroke-width="2" opacity="0.450"/><path d="M20 4q10 8 30 6" fill="none" stroke="#b0a094" stroke-width="1.500" opacity="0.400"/></svg>
<div style="left:888px;top:561px;width:97px;height:96px;background:#fff;border:1px solid #a4a4a4;"></div>
<svg style="left:898.3px;top:583.400px" width="77" height="51" viewBox="0 0 77 51"><rect width="56" height="50.500" fill="#fff"/><rect x="56.3" y="0.300" width="20.4" height="49.900" fill="#fff" stroke="#a8a8a8" stroke-width="0.600"/><ellipse cx="67.500" cy="14.500" rx="4.300" ry="2.300" fill="#e4e6f6" stroke="#8a90c0" stroke-width="0.800"/><rect x="62" y="18.3" width="11" height="0.800" fill="#9a9a9a"/><rect x="62" y="20.2" width="10" height="0.800" fill="#9a9a9a"/><rect x="62" y="22.1" width="11" height="0.800" fill="#9a9a9a"/><rect x="62" y="24.0" width="11" height="0.800" fill="#9a9a9a"/><rect x="62" y="25.9" width="9" height="0.800" fill="#9a9a9a"/><rect x="62" y="27.8" width="11" height="0.800" fill="#9a9a9a"/><rect x="62" y="29.7" width="9" height="0.800" fill="#9a9a9a"/><rect x="62" y="31.6" width="8" height="0.800" fill="#9a9a9a"/><rect x="62" y="33.5" width="7" height="0.800" fill="#9a9a9a"/><rect x="62" y="35.4" width="10" height="0.800" fill="#9a9a9a"/><rect x="61" y="42" width="15" height="7.500" fill="#fff" stroke="#888" stroke-width="0.600"/><rect x="62.500" y="46.500" width="5" height="1.300" fill="#777"/><rect x="62.0" y="40.3" width="1.600" height="1.600" fill="#e8d23a"/><rect x="63.8" y="39.8" width="1.600" height="1.600" fill="#d84a8a"/><rect x="65.6" y="39.2" width="1.600" height="1.600" fill="#3aa0d8"/><rect x="67.4" y="38.6" width="1.600" height="1.600" fill="#333"/><rect x="69.2" y="38.1" width="1.600" height="1.600" fill="#4ab04a"/><rect x="71.0" y="37.5" width="1.600" height="1.600" fill="#e08a3a"/><rect x="72.8" y="37.0" width="1.600" height="1.600" fill="#8a4ad0"/><path d="M7 2q5-1.500 8 0t8-1 8 1 9-1.500 9 1.500 6 4v11H6V7z" fill="#4e6a40"/><path d="M6 9q3-6 8-4v12H6zM47 6q6-3 8 2v9h-8z" fill="#2e4a2a"/><path d="M15 8l9-4.500 12 .500 9 4v3H15z" fill="#8c8a86"/><rect x="16" y="10" width="28" height="7" fill="#ece6da"/><path d="M17.500 11h3v3.500h-3zM23 11h3v3.500h-3zM28.500 11h3v6h-3zM35 11h3v3.500h-3zM40 11h3v3.500h-3z" fill="#54565e"/><path d="M16 14.800h28" stroke="#bbb" stroke-width="0.500"/><rect x="3" y="21" width="53" height="27.500" fill="#5cb040"/><path d="M3 21h53v5q-12 3-26 1t-27 3z" fill="#3e8e34"/><path d="M10 30q8-7 20-7l10 1-12 8q-10 0-18 3z" fill="#d89a3a"/><path d="M12 29q8-4 16-4" stroke="#e8b860" stroke-width="1.500" fill="none"/><path d="M10 37q6-5 16-5t14-4 8 3-4 7-12 4-18 1-4-6z" fill="#4aa8f0"/><path d="M12 38q8-4 18-4" stroke="#8ad0ff" stroke-width="1" fill="none"/><path d="M42 24q6-2 12 1l-1 6q-6 2-10-2z" fill="#7a8a70"/><path d="M40 42q6-3 14-1v6H40z" fill="#6a7a60"/><circle cx="6" cy="45" r="2.500" fill="#2e6e28"/><circle cx="7" cy="25" r="2.500" fill="#2e6e28"/><path d="M3 47q4 1 8-1" stroke="#c84040" stroke-width="1" fill="none"/></svg>
<!-- watermark -->
<div style="left:356px;top:47.400px;width:11.500px;height:11.200px;background:rgba(200,40,40,0.780);"></div>
<div style="left:370.700px;top:47.400px;width:11.500px;height:11.200px;background:rgba(200,40,40,0.780);"></div>
<div style="left:385.500px;top:47.400px;width:11.500px;height:11.200px;background:rgba(200,40,40,0.780);"></div>
<div style="left:356px;top:62px;width:11.500px;height:11.200px;background:rgba(200,40,40,0.780);"></div>
<div style="left:370.700px;top:62px;width:11.500px;height:11.200px;background:rgba(200,40,40,0.780);"></div>
<div style="left:385.500px;top:62px;width:11.500px;height:11.200px;background:rgba(200,40,40,0.780);"></div>
<div style="left:356px;top:76.500px;width:11.500px;height:11.200px;background:rgba(215,50,50,0.780);"></div>
<div style="left:370.700px;top:76.500px;width:11.500px;height:11.200px;background:rgba(215,50,50,0.780);"></div>
<span id="wm" class="t" style="left:410.500px;top:57.600px;transform:scaleX(1.025);font-family:'DejaVu Sans Light','DejaVu Sans',sans-serif;font-weight:200;font-size:21.300px;color:rgba(255,255,255,0.560);">Принтер-Плоттер.ру</span>
</body>
</html>
